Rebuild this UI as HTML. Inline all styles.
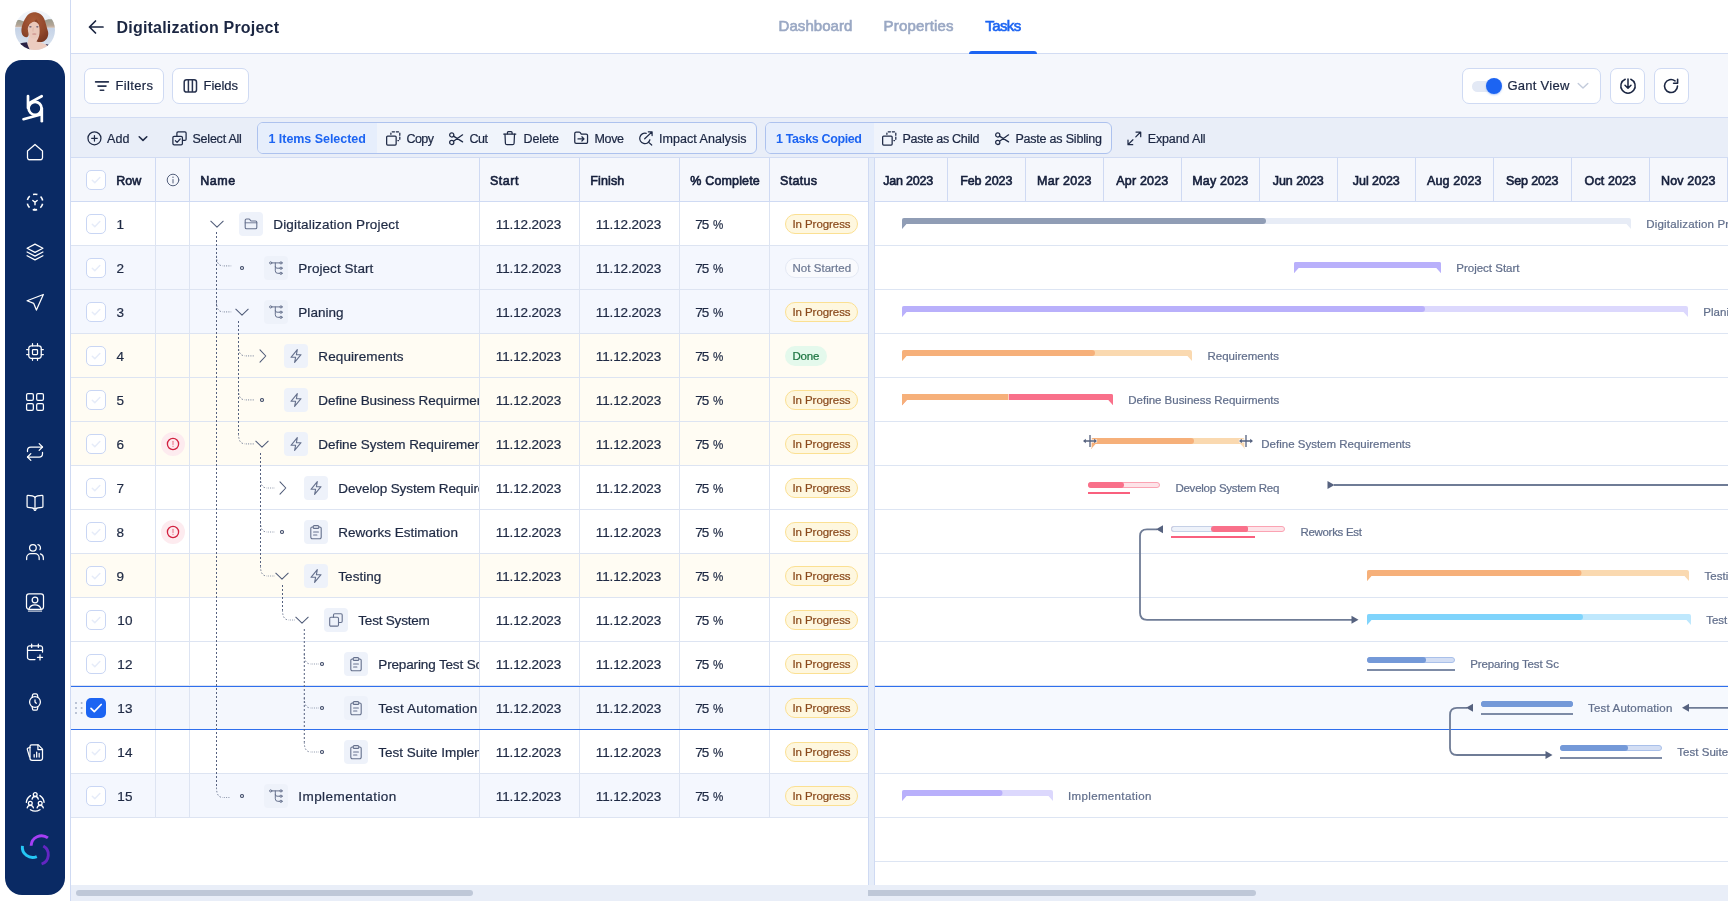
<!DOCTYPE html>
<html><head><meta charset="utf-8"><title>Digitalization Project</title>
<style>
html,body{margin:0;padding:0;}
body{width:1728px;height:901px;position:relative;overflow:hidden;background:#fff;font-family:"Liberation Sans",sans-serif;}
.b{position:absolute;box-sizing:border-box;}
.t{position:absolute;white-space:nowrap;font-family:"Liberation Sans",sans-serif;}
svg{overflow:visible;}
</style></head><body><div id="root" style="position:absolute;left:0;top:0;width:1728px;height:901px;will-change:transform;">
<div class="b" style="left:71px;top:54px;width:1657px;height:64px;background:#f5f7fc;"></div>
<div class="b" style="left:71px;top:117px;width:1657px;height:41px;background:#e9eef8;border-top:1px solid #d2dcf3;border-bottom:1px solid #d2dcf3;"></div>
<div class="b" style="left:71px;top:53px;width:1657px;height:1px;background:#d2dcf3;"></div>
<div class="b" style="left:70px;top:0px;width:1px;height:901px;background:#cfdaf3;"></div>
<svg class="b" style="left:15px;top:10px;" width="40" height="40" viewBox="0 0 40 40">
<defs><clipPath id="av"><circle cx="20" cy="20" r="20"/></clipPath>
<filter id="bl" x="-20%" y="-20%" width="140%" height="140%"><feGaussianBlur stdDeviation=".7"/></filter>
<filter id="bl2" x="-20%" y="-20%" width="140%" height="140%"><feGaussianBlur stdDeviation=".45"/></filter>
<linearGradient id="sky" x1="0" y1="0" x2="0" y2="1"><stop offset="0" stop-color="#f3f6fb"/><stop offset=".42" stop-color="#e6edf6"/><stop offset=".46" stop-color="#c6d3e6"/><stop offset="1" stop-color="#dde6f2"/></linearGradient>
<linearGradient id="hill" x1="0" y1="0" x2="0" y2="1"><stop offset="0" stop-color="#9a9a8c"/><stop offset=".7" stop-color="#b3a596"/><stop offset="1" stop-color="#d2bcae"/></linearGradient>
<radialGradient id="hair" cx=".45" cy=".3" r=".8"><stop offset="0" stop-color="#aa5c3a"/><stop offset=".6" stop-color="#91482b"/><stop offset="1" stop-color="#743421"/></radialGradient>
</defs>
<g clip-path="url(#av)">
<rect width="40" height="40" fill="url(#sky)"/>
<g filter="url(#bl)">
<path d="M-1 11.500C2 9.500 5 9.300 9 11.500L10 17.300H-1Z" fill="url(#hill)"/>
<path d="M29 11C32 9 36 8.500 41 10.500V17.800H29Z" fill="url(#hill)"/>
</g>
<g filter="url(#bl2)">
<path d="M14 26L12.500 33C9 34 7 35.500 5 37.500L8 41H33L35 36.500C32 34.500 29 33.800 26.500 33L25 26Z" fill="#ecccc0"/>
<path d="M4 34.200C6.500 32.800 9.500 32.300 12 32.200C12.500 35 13.500 37.500 15.500 40.500H6Z" fill="#2b2444"/>
<path d="M30.500 34C32 34 33.500 34.500 35 35.500L33.500 37Z" fill="#2b2444"/>
<ellipse cx="20" cy="13" rx="9" ry="9.500" fill="#8e4629"/><ellipse cx="19" cy="20" rx="6.300" ry="8.600" fill="#e9c8ba"/>
<path d="M18.500 2.300C23 2 27.500 4.500 29.500 9.500C31 13.500 31.500 17 33 21.500C34 25.500 32 30 28.500 31.500C26 32.500 23.500 32 21.500 31.500C24 28 24.800 24 24.600 20C24.400 15.500 23.800 12 21.500 9.200C19 11.500 15.500 13 13 14.500C12.600 17.500 12.800 20.500 13.500 23.500C13.800 25 13.500 26.800 11.500 27.200C9 27.500 7 25.500 6.500 22C6 17 8.500 11 11.500 6.500C13.300 4 15.800 2.500 18.500 2.300Z" fill="url(#hair)"/>
<ellipse cx="15.400" cy="16.800" rx="1.300" ry=".6" fill="#4a4766"/>
<ellipse cx="22.300" cy="16.800" rx="1.200" ry=".6" fill="#4a4766"/>
<path d="M18.300 17.500C18 19.500 17.800 20.500 18 21.500" stroke="#dcb2a4" stroke-width=".9" fill="none"/>
<ellipse cx="19.300" cy="24" rx="2.200" ry=".85" fill="#cf9690"/>
</g>
</g></svg>
<div class="b" style="left:5px;top:60px;width:60px;height:835px;background:#0a2a64;border-radius:17px;"></div>
<svg class="b" style="left:20px;top:93px;" width="30" height="30" viewBox="0 0 30 30"><g stroke="#fff" fill="none" stroke-linecap="round" stroke-linejoin="round" stroke-width="2.700">
<circle cx="15.100" cy="15.300" r="6.500"/>
<path d="M8 3V15"/><path d="M21.800 15.500V28.200"/>
<path d="M21.700 3.200L9.400 9.900"/><path d="M3.500 26.200L20.800 21.500"/></g></svg>
<svg class="b" style="left:25.0px;top:141.9px;" width="20" height="20" viewBox="0 0 24 24"><g stroke="#fff" fill="none" stroke-linecap="round" stroke-linejoin="round" stroke-width="1.5"><path d="M3 10.8L12 3l9 7.8V19a2 2 0 0 1-2 2H5a2 2 0 0 1-2-2z"/><path d="M4 21.4h16" stroke-width="1" opacity=".7"/></g></svg>
<svg class="b" style="left:25.0px;top:192.1px;" width="20" height="20" viewBox="0 0 24 24"><g stroke="#fff" fill="none" stroke-linecap="round" stroke-linejoin="round" stroke-width="1.5"><circle cx="12" cy="12" r="9.400" stroke-width="1.900" stroke-dasharray="5.400 4.443" stroke-dashoffset="-2.220" stroke-linecap="butt"/><path d="M9.400 10.100L12 12.400l2.600-2.300M12 12.400v3" stroke-width="1.700"/><path d="M10.400 21.500L12 19.900l1.600 1.600z" fill="#fff" stroke-width=".8"/></g></svg>
<svg class="b" style="left:25.0px;top:241.9px;" width="20" height="20" viewBox="0 0 24 24"><g stroke="#fff" fill="none" stroke-linecap="round" stroke-linejoin="round" stroke-width="1.5"><path d="M12 2.5L2.5 7.5 12 12.5l9.500-5z"/><path d="M2.5 12L12 17l9.500-5"/><path d="M2.5 16.500L12 21.500l9.500-5"/></g></svg>
<svg class="b" style="left:25.0px;top:291.9px;" width="20" height="20" viewBox="0 0 24 24"><g stroke="#fff" fill="none" stroke-linecap="round" stroke-linejoin="round" stroke-width="1.5"><path d="M22 3L2.5 10.5l8 3.200 3.200 8z"/></g></svg>
<svg class="b" style="left:25.0px;top:341.9px;" width="20" height="20" viewBox="0 0 24 24"><g stroke="#fff" fill="none" stroke-linecap="round" stroke-linejoin="round" stroke-width="1.5"><rect x="4.500" y="4.500" width="15" height="15" rx="3"/><rect x="9" y="9" width="6" height="6" rx="1"/><path d="M9 2v2.500M15 2v2.500M9 19.500V22M15 19.500V22M2 9h2.500M2 15h2.500M19.500 9H22M19.500 15H22"/></g></svg>
<svg class="b" style="left:25.0px;top:391.9px;" width="20" height="20" viewBox="0 0 24 24"><g stroke="#fff" fill="none" stroke-linecap="round" stroke-linejoin="round" stroke-width="1.5"><rect x="1.900" y="1.900" width="8.100" height="8.100" rx="1.600"/><rect x="14" y="1.900" width="8.100" height="8.100" rx="1.600"/><rect x="1.900" y="14" width="8.100" height="8.100" rx="1.600"/><rect x="14" y="14" width="8.100" height="8.100" rx="1.600"/></g></svg>
<svg class="b" style="left:25.0px;top:441.9px;" width="20" height="20" viewBox="0 0 24 24"><g stroke="#fff" fill="none" stroke-linecap="round" stroke-linejoin="round" stroke-width="1.5"><path d="M17 2l4 4-4 4"/><path d="M3 11.500V10a4 4 0 0 1 4-4h14"/><path d="M7 22l-4-4 4-4"/><path d="M21 12.500V14a4 4 0 0 1-4 4H3"/></g></svg>
<svg class="b" style="left:25.0px;top:491.9px;" width="20" height="20" viewBox="0 0 24 24"><g stroke="#fff" fill="none" stroke-linecap="round" stroke-linejoin="round" stroke-width="1.5"><path d="M12 6.500v13.500"/><path d="M12 6.500C10.500 4.800 8 4 3.500 4a1 1 0 0 0-1 1v12.500a1 1 0 0 0 1 1c4 0 6.500.500 8.500 2.200 2-1.700 4.500-2.200 8.500-2.200a1 1 0 0 0 1-1V5a1 1 0 0 0-1-1C16 4 13.500 4.800 12 6.500z"/><path d="M10.500 21.500l1.500 1 1.500-1" stroke-width="1.200"/></g></svg>
<svg class="b" style="left:25.0px;top:541.9px;" width="20" height="20" viewBox="0 0 24 24"><g stroke="#fff" fill="none" stroke-linecap="round" stroke-linejoin="round" stroke-width="1.5"><circle cx="9.500" cy="7" r="4"/><path d="M2 21v-2a5 5 0 0 1 5-5h5a5 5 0 0 1 5 5v2"/><path d="M15.500 3.200a4 4 0 0 1 2.500 6"/><path d="M18.500 14.200A5 5 0 0 1 22 19v2"/></g></svg>
<svg class="b" style="left:25.0px;top:591.9px;" width="20" height="20" viewBox="0 0 24 24"><g stroke="#fff" fill="none" stroke-linecap="round" stroke-linejoin="round" stroke-width="1.5"><rect x="1.800" y="2.200" width="20.400" height="18.500" rx="3"/><circle cx="12" cy="9.600" r="3.400"/><path d="M4.800 20.200c1.100-3.200 3.900-4.800 7.200-4.800s6.100 1.600 7.200 4.800"/><path d="M4 22.900h16" stroke-width="1.200"/></g></svg>
<svg class="b" style="left:25.0px;top:641.9px;" width="20" height="20" viewBox="0 0 24 24"><g stroke="#fff" fill="none" stroke-linecap="round" stroke-linejoin="round" stroke-width="1.5"><path d="M21 12V7a2.500 2.500 0 0 0-2.500-2.500h-13A2.500 2.500 0 0 0 3 7v11.500A2.500 2.500 0 0 0 5.500 21H12"/><path d="M8 2.500v4M16 2.500v4M3 10h18"/><path d="M18 15.500v6M15 18.500h6"/></g></svg>
<svg class="b" style="left:25.0px;top:691.9px;" width="20" height="20" viewBox="0 0 24 24"><g stroke="#fff" fill="none" stroke-linecap="round" stroke-linejoin="round" stroke-width="1.5"><circle cx="12" cy="12" r="6.500"/><path d="M12 9.500V12l1.500 1.500"/><path d="M8.500 6.500l.6-3a1.500 1.500 0 0 1 1.500-1.200h2.800a1.500 1.500 0 0 1 1.500 1.200l.6 3"/><path d="M8.500 17.500l.6 3a1.500 1.500 0 0 0 1.500 1.200h2.800a1.500 1.500 0 0 0 1.500-1.200l.6-3"/></g></svg>
<svg class="b" style="left:25.0px;top:741.9px;" width="20" height="20" viewBox="0 0 24 24"><g stroke="#fff" fill="none" stroke-linecap="round" stroke-linejoin="round" stroke-width="1.5"><path d="M8 3.500h8l5 5V19.500a2.500 2.500 0 0 1-2.500 2.500h-10A2.500 2.500 0 0 1 6 19.500v-14A2 2 0 0 1 8 3.500z"/><path d="M15.500 3.500V9H21"/><path d="M6 6.500L3.800 7.200a1.500 1.500 0 0 0-1 1.900L5.500 18"/><path d="M11 18v-3M14 18v-6M17 18v-4.500"/></g></svg>
<svg class="b" style="left:24px;top:791px;" width="22" height="23" viewBox="0 0 22 23"><g stroke="#fff" fill="none" stroke-linecap="round" stroke-linejoin="round" stroke-width="1.300">
<circle cx="11.200" cy="3.500" r="1.900"/><path d="M8.100 8.100c.4-1.900 1.600-2.600 3.100-2.600s2.700.7 3.100 2.600"/>
<circle cx="6.300" cy="12.300" r="1.900"/><path d="M3.200 16.900c.4-1.900 1.600-2.600 3.100-2.600s2.700.7 3.100 2.600"/>
<circle cx="16.200" cy="12.300" r="1.900"/><path d="M13.100 16.900c.4-1.900 1.600-2.600 3.100-2.600s2.700.7 3.100 2.600"/>
<path d="M2.300 11.400A9.200 9.200 0 0 1 6.500 4.600"/><path d="M20.100 11.400A9.200 9.200 0 0 0 15.900 4.600"/><path d="M6.400 18.700A9.200 9.200 0 0 0 16 18.700"/></g></svg>
<svg class="b" style="left:15px;top:830px;" width="40" height="40" viewBox="0 0 40 40"><g fill="none" stroke-linecap="butt" stroke-width="2.900">
<path d="M16.100 15.800A10.500 10.500 0 0 1 32.900 7.900" stroke="#a63ff5"/>
<path d="M28.300 16A9.900 9.900 0 0 1 26.600 34" stroke="#6326c2"/>
<path d="M7.400 15.900A10.300 10.300 0 0 0 21.800 26.600" stroke="#25c7f6"/></g></svg>
<svg class="b" style="left:87px;top:19px;" width="18" height="16" viewBox="0 0 18 16"><path d="M16 8H2.500M8.500 2L2.500 8l6 6" stroke="#1b2642" stroke-width="1.700" fill="none" stroke-linecap="round" stroke-linejoin="round"/></svg>
<div class="t" style="left:116.50px;top:18px;font-size:16px;line-height:20px;color:#1b2642;font-weight:700;letter-spacing:0.203px;">Digitalization Project</div>
<div class="t" style="left:778.60px;top:16px;font-size:15px;line-height:20px;color:#9aa8c4;-webkit-text-stroke:.62px #9aa8c4;letter-spacing:0.052px;">Dashboard</div>
<div class="t" style="left:883.60px;top:16px;font-size:15px;line-height:20px;color:#9aa8c4;-webkit-text-stroke:.62px #9aa8c4;letter-spacing:0.182px;">Properties</div>
<div class="t" style="left:985.20px;top:16px;font-size:15px;line-height:20px;color:#1c64f2;-webkit-text-stroke:.62px #1c64f2;letter-spacing:-0.561px;">Tasks</div>
<div class="b" style="left:969px;top:51px;width:68px;height:3px;background:#1c64f2;border-radius:3px 3px 0 0;"></div>
<div class="b" style="left:84px;top:68px;width:80px;height:36px;background:#fff;border:1px solid #cfdaf3;border-radius:7px;"></div>
<svg class="b" style="left:94px;top:79px;" width="16" height="14" viewBox="0 0 16 14"><path d="M1.600 2.900h12.800M4 7.100h8M6.300 11.300h3.400" stroke="#28334f" stroke-width="1.600" fill="none" stroke-linecap="round"/></svg>
<div class="t" style="left:115.50px;top:76px;font-size:13px;line-height:20px;color:#1b2642;-webkit-text-stroke:.22px #1b2642;letter-spacing:0.352px;">Filters</div>
<div class="b" style="left:172px;top:68px;width:77px;height:36px;background:#fff;border:1px solid #cfdaf3;border-radius:7px;"></div>
<svg class="b" style="left:182.5px;top:78px;" width="15" height="16" viewBox="0 0 15 16"><g stroke="#28334f" stroke-width="1.500" fill="none"><rect x="1.200" y="1.700" width="12.300" height="12.400" rx="2.400"/><path d="M5.400 1.700v12.400M9.400 1.700v12.400"/></g></svg>
<div class="t" style="left:203.50px;top:76px;font-size:13px;line-height:20px;color:#1b2642;-webkit-text-stroke:.22px #1b2642;letter-spacing:-0.035px;">Fields</div>
<div class="b" style="left:1462px;top:68px;width:139px;height:36px;background:#fff;border:1px solid #cfdaf3;border-radius:7px;"></div>
<div class="b" style="left:1472px;top:80.5px;width:24px;height:11px;background:#e3e9f5;border-radius:6px;"></div>
<div class="b" style="left:1486px;top:78px;width:16px;height:16px;background:#1c64f2;border-radius:50%;box-shadow:0 1px 2px rgba(28,100,242,.35);"></div>
<div class="t" style="left:1507.50px;top:76px;font-size:13px;line-height:20px;color:#1b2642;-webkit-text-stroke:.22px #1b2642;letter-spacing:0.258px;">Gant View</div>
<svg class="b" style="left:1577px;top:82px;" width="12" height="8" viewBox="0 0 12 8"><path d="M1.200 1.500L6 6l4.800-4.500" stroke="#c3cbdb" stroke-width="1.400" fill="none" stroke-linecap="round" stroke-linejoin="round"/></svg>
<div class="b" style="left:1610px;top:68px;width:35px;height:36px;background:#fff;border:1px solid #cfdaf3;border-radius:7px;"></div>
<svg class="b" style="left:1619.5px;top:78px;" width="16" height="16" viewBox="0 0 16 16"><g stroke="#1b2642" stroke-width="1.500" fill="none" stroke-linecap="round" stroke-linejoin="round"><path d="M5.200 1.300A7.200 7.200 0 1 0 10.800 1.300"/><path d="M8 1v9M5 7.300l3 3 3-3"/></g></svg>
<div class="b" style="left:1654px;top:68px;width:35px;height:36px;background:#fff;border:1px solid #cfdaf3;border-radius:7px;"></div>
<svg class="b" style="left:1663px;top:78px;" width="16" height="16" viewBox="0 0 16 16"><g stroke="#1b2642" stroke-width="1.600" fill="none" stroke-linecap="round" stroke-linejoin="round"><path d="M14.500 8A6.500 6.500 0 1 1 12 2.900"/><path d="M14.600 1.200v4h-4"/></g></svg>
<svg class="b" style="left:86.5px;top:130.5px;" width="15" height="15" viewBox="0 0 15 15"><g stroke="#1f2a46" stroke-width="1.25" fill="none" stroke-linecap="round" stroke-linejoin="round"><circle cx="7.450" cy="7.300" r="6.500"/><path d="M7.450 4.500v5.600M4.650 7.300h5.600"/></g></svg>
<div class="t" style="left:107.00px;top:129px;font-size:12.5px;line-height:20px;color:#1b2642;-webkit-text-stroke:.22px #1b2642;letter-spacing:0.130px;">Add</div>
<svg class="b" style="left:138px;top:134.5px;" width="11" height="8" viewBox="0 0 11 8"><path d="M1.200 1.700L5 5.400 8.800 1.700" stroke="#1f2a46" stroke-width="1.550" fill="none" stroke-linecap="round" stroke-linejoin="round"/></svg>
<svg class="b" style="left:171.6px;top:130.7px;" width="15" height="15" viewBox="0 0 15 15"><g stroke="#1f2a46" stroke-width="1.25" fill="none" stroke-linecap="round" stroke-linejoin="round"><rect x=".900" y="5.300" width="9.500" height="8.600" rx="1.300"/><path d="M4.900 5V2a1.200 1.200 0 0 1 1.200-1.200H12.900a1.200 1.200 0 0 1 1.200 1.200V8.200a1.200 1.200 0 0 1-1.200 1.200H10.700"/><path d="M3.400 9.700l1.700 1.700 3.100-3.400"/></g></svg>
<div class="t" style="left:192.50px;top:129px;font-size:12.5px;line-height:20px;color:#1b2642;-webkit-text-stroke:.22px #1b2642;letter-spacing:-0.224px;">Select All</div>
<div class="b" style="left:257px;top:122px;width:500px;height:32px;background:#f0f4fb;border:1px solid #adc2ee;border-radius:6px;"></div>
<div class="b" style="left:258px;top:123px;width:119px;height:30px;background:#e6eefc;border-radius:5px 0 0 5px;"></div>
<div class="t" style="left:268.50px;top:129px;font-size:12.5px;line-height:20px;color:#1c64f2;font-weight:700;letter-spacing:-0.044px;">1 Items Selected</div>
<svg class="b" style="left:385.7px;top:130.6px;" width="15" height="15" viewBox="0 0 15 15"><g stroke="#1f2a46" stroke-width="1.25" fill="none" stroke-linecap="round" stroke-linejoin="round"><rect x=".650" y="5" width="9.500" height="9" rx="1"/><path d="M4.900 3.300V2a1.200 1.200 0 0 1 1.200-1.200H12.600a1.200 1.200 0 0 1 1.200 1.200V8.400a1.200 1.200 0 0 1-1.200 1.200H11.900" stroke-dasharray="2.200 1.850" stroke-dashoffset=".900"/></g></svg>
<div class="t" style="left:406.50px;top:129px;font-size:12.5px;line-height:20px;color:#1b2642;-webkit-text-stroke:.22px #1b2642;letter-spacing:-0.560px;">Copy</div>
<svg class="b" style="left:449px;top:131.5px;" width="15" height="14" viewBox="0 0 15 14"><g stroke="#1f2a46" stroke-width="1.25" fill="none" stroke-linecap="round" stroke-linejoin="round"><circle cx="2.750" cy="2.900" r="2.100"/><circle cx="2.750" cy="10.400" r="2.100"/><path d="M4.500 4.100L13.600 9.900M4.500 9.200L13.600 2.800"/></g></svg>
<div class="t" style="left:469.40px;top:129px;font-size:12.5px;line-height:20px;color:#1b2642;-webkit-text-stroke:.22px #1b2642;letter-spacing:-0.426px;">Cut</div>
<svg class="b" style="left:503.3px;top:130.6px;" width="14" height="15" viewBox="0 0 14 15"><g stroke="#1f2a46" stroke-width="1.25" fill="none" stroke-linecap="round" stroke-linejoin="round"><path d="M.700 3H12.800"/><path d="M4.400 2.800V1.700a1 1 0 0 1 1-1h2.700a1 1 0 0 1 1 1V2.800"/><path d="M2 3.200l.400 9a1.600 1.600 0 0 0 1.600 1.500h5.500a1.600 1.600 0 0 0 1.600-1.500l.400-9"/></g></svg>
<div class="t" style="left:523.50px;top:129px;font-size:12.5px;line-height:20px;color:#1b2642;-webkit-text-stroke:.22px #1b2642;letter-spacing:-0.126px;">Delete</div>
<svg class="b" style="left:573.5px;top:131px;" width="15" height="14" viewBox="0 0 15 14"><g stroke="#1f2a46" stroke-width="1.25" fill="none" stroke-linecap="round" stroke-linejoin="round"><path d="M.750 2.400V11a1.400 1.400 0 0 0 1.400 1.400h10a1.400 1.400 0 0 0 1.400-1.400V4.500a1.400 1.400 0 0 0-1.400-1.400H7.300L6 1.400A1 1 0 0 0 5.200 1H2.150A1.400 1.400 0 0 0 .750 2.400z"/><path d="M4 7.900h6M7.900 5.800l2.100 2.100-2.100 2.100"/></g></svg>
<div class="t" style="left:594.60px;top:129px;font-size:12.5px;line-height:20px;color:#1b2642;-webkit-text-stroke:.22px #1b2642;letter-spacing:-0.389px;">Move</div>
<svg class="b" style="left:639.3px;top:130.5px;" width="15" height="15" viewBox="0 0 15 15"><g stroke="#1f2a46" stroke-width="1.25" fill="none" stroke-linecap="round" stroke-linejoin="round"><path d="M7.250 2.400A5.200 5.200 0 1 0 10.920 8.750"/><path d="M9.700 11.400l3 2.600"/><path d="M5.700 7.800L13 .900M9.300.800H13.100V4.600"/></g></svg>
<div class="t" style="left:659.00px;top:129px;font-size:12.5px;line-height:20px;color:#1b2642;-webkit-text-stroke:.22px #1b2642;letter-spacing:0.047px;">Impact Analysis</div>
<div class="b" style="left:765px;top:122px;width:347px;height:32px;background:#f0f4fb;border:1px solid #adc2ee;border-radius:6px;"></div>
<div class="b" style="left:766px;top:123px;width:108px;height:30px;background:#e6eefc;border-radius:5px 0 0 5px;"></div>
<div class="t" style="left:776.00px;top:129px;font-size:12.5px;line-height:20px;color:#1c64f2;font-weight:700;letter-spacing:-0.367px;">1 Tasks Copied</div>
<svg class="b" style="left:881.5px;top:130.6px;" width="15" height="15" viewBox="0 0 15 15"><g stroke="#1f2a46" stroke-width="1.25" fill="none" stroke-linecap="round" stroke-linejoin="round"><rect x=".650" y="5" width="9.500" height="9" rx="1"/><path d="M4.900 3.300V2a1.200 1.200 0 0 1 1.200-1.200H12.600a1.200 1.200 0 0 1 1.200 1.200V8.400a1.200 1.200 0 0 1-1.200 1.200H11.900" stroke-dasharray="2.200 1.850" stroke-dashoffset=".900"/></g></svg>
<div class="t" style="left:902.50px;top:129px;font-size:12.5px;line-height:20px;color:#1b2642;-webkit-text-stroke:.22px #1b2642;letter-spacing:-0.284px;">Paste as Child</div>
<svg class="b" style="left:994.6px;top:131.5px;" width="15" height="14" viewBox="0 0 15 14"><g stroke="#1f2a46" stroke-width="1.25" fill="none" stroke-linecap="round" stroke-linejoin="round"><circle cx="2.750" cy="2.900" r="2.100"/><circle cx="2.750" cy="10.400" r="2.100"/><path d="M4.500 4.100L13.600 9.900M4.500 9.200L13.600 2.800"/></g></svg>
<div class="t" style="left:1015.40px;top:129px;font-size:12.5px;line-height:20px;color:#1b2642;-webkit-text-stroke:.22px #1b2642;letter-spacing:-0.202px;">Paste as Sibling</div>
<svg class="b" style="left:1127px;top:131px;" width="15" height="15" viewBox="0 0 15 15"><g stroke="#1f2a46" stroke-width="1.25" fill="none" stroke-linecap="round" stroke-linejoin="round"><path d="M9 1h4.700v4.700M13.400 1.300L8.800 5.900M5.700 13.700H1V9M1.300 13.400l4.600-4.600"/></g></svg>
<div class="t" style="left:1147.70px;top:129px;font-size:12.5px;line-height:20px;color:#1b2642;-webkit-text-stroke:.22px #1b2642;letter-spacing:-0.130px;">Expand All</div>
<div class="b" style="left:71px;top:158px;width:1657px;height:44px;background:#f5f7fc;border-bottom:1px solid #cfdaf3;"></div>
<div class="b" style="left:155px;top:158px;width:1px;height:44px;background:#cfdaf3;"></div>
<div class="b" style="left:189px;top:158px;width:1px;height:44px;background:#cfdaf3;"></div>
<div class="b" style="left:479px;top:158px;width:1px;height:44px;background:#cfdaf3;"></div>
<div class="b" style="left:579px;top:158px;width:1px;height:44px;background:#cfdaf3;"></div>
<div class="b" style="left:679px;top:158px;width:1px;height:44px;background:#cfdaf3;"></div>
<div class="b" style="left:769px;top:158px;width:1px;height:44px;background:#cfdaf3;"></div>
<div class="t" style="left:116.20px;top:171px;font-size:12.5px;line-height:20px;color:#151f3b;-webkit-text-stroke:.62px #151f3b;letter-spacing:-0.002px;">Row</div>
<svg class="b" style="left:166px;top:173px;" width="14" height="14" viewBox="0 0 14 14"><g stroke="#55617d" fill="none" stroke-width="1" stroke-linecap="round"><circle cx="7" cy="7" r="5.800"/><path d="M7 6.500v3.500"/><path d="M7 4.200v.100" stroke-width="1.300"/></g></svg>
<div class="t" style="left:200.20px;top:171px;font-size:12.5px;line-height:20px;color:#151f3b;-webkit-text-stroke:.62px #151f3b;letter-spacing:0.553px;">Name</div>
<div class="t" style="left:490.00px;top:171px;font-size:12.5px;line-height:20px;color:#151f3b;-webkit-text-stroke:.62px #151f3b;letter-spacing:0.525px;">Start</div>
<div class="t" style="left:590.30px;top:171px;font-size:12.5px;line-height:20px;color:#151f3b;-webkit-text-stroke:.62px #151f3b;letter-spacing:0.132px;">Finish</div>
<div class="t" style="left:690.30px;top:171px;font-size:12.5px;line-height:20px;color:#151f3b;-webkit-text-stroke:.62px #151f3b;letter-spacing:0.157px;">% Complete</div>
<div class="t" style="left:780.00px;top:171px;font-size:12.5px;line-height:20px;color:#151f3b;-webkit-text-stroke:.62px #151f3b;letter-spacing:0.312px;">Status</div>
<div class="b" style="left:86px;top:170px;width:20px;height:20px;background:#fff;border:1px solid #c9d6f4;border-radius:5px;"></div>
<svg class="b" style="left:86px;top:170px;" width="20" height="20" viewBox="0 0 20 20"><path d="M6.300 10.200l2.500 2.500L13.800 7.500" stroke="#e6ecf9" stroke-width="1.500" fill="none" stroke-linecap="round" stroke-linejoin="round"/></svg>
<div class="b" style="left:71px;top:202px;width:797px;height:44px;background:#ffffff;border-bottom:1px solid #dde4f2;"></div>
<div class="b" style="left:155px;top:202px;width:1px;height:44px;background:#dde4f2;"></div>
<div class="b" style="left:189px;top:202px;width:1px;height:44px;background:#dde4f2;"></div>
<div class="b" style="left:479px;top:202px;width:1px;height:44px;background:#dde4f2;"></div>
<div class="b" style="left:579px;top:202px;width:1px;height:44px;background:#dde4f2;"></div>
<div class="b" style="left:679px;top:202px;width:1px;height:44px;background:#dde4f2;"></div>
<div class="b" style="left:769px;top:202px;width:1px;height:44px;background:#dde4f2;"></div>
<div class="b" style="left:86px;top:214px;width:20px;height:20px;background:#fff;border:1px solid #c9d6f4;border-radius:5px;"></div>
<svg class="b" style="left:86px;top:214px;" width="20" height="20" viewBox="0 0 20 20"><path d="M6.300 10.200l2.500 2.500L13.800 7.500" stroke="#e6ecf9" stroke-width="1.500" fill="none" stroke-linecap="round" stroke-linejoin="round"/></svg>
<div class="t" style="left:116.60px;top:215px;font-size:13.5px;line-height:20px;color:#1f2a44;-webkit-text-stroke:.22px #1f2a44;">1</div>
<div class="t" style="left:495.80px;top:215px;font-size:13.5px;line-height:20px;color:#1f2a44;-webkit-text-stroke:.22px #1f2a44;letter-spacing:-0.129px;">11.12.2023</div>
<div class="t" style="left:595.80px;top:215px;font-size:13.5px;line-height:20px;color:#1f2a44;-webkit-text-stroke:.22px #1f2a44;letter-spacing:-0.129px;">11.12.2023</div>
<div class="t" style="left:695.30px;top:215px;font-size:13.5px;line-height:20px;color:#1f2a44;-webkit-text-stroke:.22px #1f2a44;letter-spacing:-1.116px;">75</div>
<div class="t" style="left:713.40px;top:215px;font-size:13.5px;line-height:20px;color:#1f2a44;-webkit-text-stroke:.22px #1f2a44;transform:scaleX(.86);transform-origin:0 0;">%</div>
<div class="b" style="left:785px;top:214px;width:73px;height:20px;background:#fef7df;border:1px solid #fbe092;border-radius:10px;"></div>
<div class="t" style="left:792.40px;top:214px;font-size:11.5px;line-height:20px;color:#8a4a1c;-webkit-text-stroke:.22px #8a4a1c;letter-spacing:-0.060px;">In Progress</div>
<div class="b" style="left:71px;top:246px;width:797px;height:44px;background:#f4f7fe;border-bottom:1px solid #dde4f2;"></div>
<div class="b" style="left:155px;top:246px;width:1px;height:44px;background:#dde4f2;"></div>
<div class="b" style="left:189px;top:246px;width:1px;height:44px;background:#dde4f2;"></div>
<div class="b" style="left:479px;top:246px;width:1px;height:44px;background:#dde4f2;"></div>
<div class="b" style="left:579px;top:246px;width:1px;height:44px;background:#dde4f2;"></div>
<div class="b" style="left:679px;top:246px;width:1px;height:44px;background:#dde4f2;"></div>
<div class="b" style="left:769px;top:246px;width:1px;height:44px;background:#dde4f2;"></div>
<div class="b" style="left:86px;top:258px;width:20px;height:20px;background:#fff;border:1px solid #c9d6f4;border-radius:5px;"></div>
<svg class="b" style="left:86px;top:258px;" width="20" height="20" viewBox="0 0 20 20"><path d="M6.300 10.200l2.500 2.500L13.800 7.500" stroke="#e6ecf9" stroke-width="1.500" fill="none" stroke-linecap="round" stroke-linejoin="round"/></svg>
<div class="t" style="left:116.60px;top:259px;font-size:13.5px;line-height:20px;color:#1f2a44;-webkit-text-stroke:.22px #1f2a44;">2</div>
<div class="t" style="left:495.80px;top:259px;font-size:13.5px;line-height:20px;color:#1f2a44;-webkit-text-stroke:.22px #1f2a44;letter-spacing:-0.129px;">11.12.2023</div>
<div class="t" style="left:595.80px;top:259px;font-size:13.5px;line-height:20px;color:#1f2a44;-webkit-text-stroke:.22px #1f2a44;letter-spacing:-0.129px;">11.12.2023</div>
<div class="t" style="left:695.30px;top:259px;font-size:13.5px;line-height:20px;color:#1f2a44;-webkit-text-stroke:.22px #1f2a44;letter-spacing:-1.116px;">75</div>
<div class="t" style="left:713.40px;top:259px;font-size:13.5px;line-height:20px;color:#1f2a44;-webkit-text-stroke:.22px #1f2a44;transform:scaleX(.86);transform-origin:0 0;">%</div>
<div class="b" style="left:785px;top:258px;width:73.5px;height:20px;background:#f9fafd;border:1px solid #e4e9f4;border-radius:10px;"></div>
<div class="t" style="left:792.40px;top:258px;font-size:11.5px;line-height:20px;color:#6d7993;-webkit-text-stroke:.22px #6d7993;letter-spacing:0.053px;">Not Started</div>
<div class="b" style="left:71px;top:290px;width:797px;height:44px;background:#f4f7fe;border-bottom:1px solid #dde4f2;"></div>
<div class="b" style="left:155px;top:290px;width:1px;height:44px;background:#dde4f2;"></div>
<div class="b" style="left:189px;top:290px;width:1px;height:44px;background:#dde4f2;"></div>
<div class="b" style="left:479px;top:290px;width:1px;height:44px;background:#dde4f2;"></div>
<div class="b" style="left:579px;top:290px;width:1px;height:44px;background:#dde4f2;"></div>
<div class="b" style="left:679px;top:290px;width:1px;height:44px;background:#dde4f2;"></div>
<div class="b" style="left:769px;top:290px;width:1px;height:44px;background:#dde4f2;"></div>
<div class="b" style="left:86px;top:302px;width:20px;height:20px;background:#fff;border:1px solid #c9d6f4;border-radius:5px;"></div>
<svg class="b" style="left:86px;top:302px;" width="20" height="20" viewBox="0 0 20 20"><path d="M6.300 10.200l2.500 2.500L13.800 7.500" stroke="#e6ecf9" stroke-width="1.500" fill="none" stroke-linecap="round" stroke-linejoin="round"/></svg>
<div class="t" style="left:116.60px;top:303px;font-size:13.5px;line-height:20px;color:#1f2a44;-webkit-text-stroke:.22px #1f2a44;">3</div>
<div class="t" style="left:495.80px;top:303px;font-size:13.5px;line-height:20px;color:#1f2a44;-webkit-text-stroke:.22px #1f2a44;letter-spacing:-0.129px;">11.12.2023</div>
<div class="t" style="left:595.80px;top:303px;font-size:13.5px;line-height:20px;color:#1f2a44;-webkit-text-stroke:.22px #1f2a44;letter-spacing:-0.129px;">11.12.2023</div>
<div class="t" style="left:695.30px;top:303px;font-size:13.5px;line-height:20px;color:#1f2a44;-webkit-text-stroke:.22px #1f2a44;letter-spacing:-1.116px;">75</div>
<div class="t" style="left:713.40px;top:303px;font-size:13.5px;line-height:20px;color:#1f2a44;-webkit-text-stroke:.22px #1f2a44;transform:scaleX(.86);transform-origin:0 0;">%</div>
<div class="b" style="left:785px;top:302px;width:73px;height:20px;background:#fef7df;border:1px solid #fbe092;border-radius:10px;"></div>
<div class="t" style="left:792.40px;top:302px;font-size:11.5px;line-height:20px;color:#8a4a1c;-webkit-text-stroke:.22px #8a4a1c;letter-spacing:-0.060px;">In Progress</div>
<div class="b" style="left:71px;top:334px;width:797px;height:44px;background:#fffcf3;border-bottom:1px solid #dde4f2;"></div>
<div class="b" style="left:155px;top:334px;width:1px;height:44px;background:#dde4f2;"></div>
<div class="b" style="left:189px;top:334px;width:1px;height:44px;background:#dde4f2;"></div>
<div class="b" style="left:479px;top:334px;width:1px;height:44px;background:#dde4f2;"></div>
<div class="b" style="left:579px;top:334px;width:1px;height:44px;background:#dde4f2;"></div>
<div class="b" style="left:679px;top:334px;width:1px;height:44px;background:#dde4f2;"></div>
<div class="b" style="left:769px;top:334px;width:1px;height:44px;background:#dde4f2;"></div>
<div class="b" style="left:86px;top:346px;width:20px;height:20px;background:#fff;border:1px solid #c9d6f4;border-radius:5px;"></div>
<svg class="b" style="left:86px;top:346px;" width="20" height="20" viewBox="0 0 20 20"><path d="M6.300 10.200l2.500 2.500L13.800 7.500" stroke="#e6ecf9" stroke-width="1.500" fill="none" stroke-linecap="round" stroke-linejoin="round"/></svg>
<div class="t" style="left:116.60px;top:347px;font-size:13.5px;line-height:20px;color:#1f2a44;-webkit-text-stroke:.22px #1f2a44;">4</div>
<div class="t" style="left:495.80px;top:347px;font-size:13.5px;line-height:20px;color:#1f2a44;-webkit-text-stroke:.22px #1f2a44;letter-spacing:-0.129px;">11.12.2023</div>
<div class="t" style="left:595.80px;top:347px;font-size:13.5px;line-height:20px;color:#1f2a44;-webkit-text-stroke:.22px #1f2a44;letter-spacing:-0.129px;">11.12.2023</div>
<div class="t" style="left:695.30px;top:347px;font-size:13.5px;line-height:20px;color:#1f2a44;-webkit-text-stroke:.22px #1f2a44;letter-spacing:-1.116px;">75</div>
<div class="t" style="left:713.40px;top:347px;font-size:13.5px;line-height:20px;color:#1f2a44;-webkit-text-stroke:.22px #1f2a44;transform:scaleX(.86);transform-origin:0 0;">%</div>
<div class="b" style="left:785px;top:346px;width:42px;height:20px;background:#e4f9ec;border-radius:10px;"></div>
<div class="t" style="left:792.40px;top:346px;font-size:11.5px;line-height:20px;color:#1b7440;-webkit-text-stroke:.22px #1b7440;letter-spacing:-0.164px;">Done</div>
<div class="b" style="left:71px;top:378px;width:797px;height:44px;background:#fffcf3;border-bottom:1px solid #dde4f2;"></div>
<div class="b" style="left:155px;top:378px;width:1px;height:44px;background:#dde4f2;"></div>
<div class="b" style="left:189px;top:378px;width:1px;height:44px;background:#dde4f2;"></div>
<div class="b" style="left:479px;top:378px;width:1px;height:44px;background:#dde4f2;"></div>
<div class="b" style="left:579px;top:378px;width:1px;height:44px;background:#dde4f2;"></div>
<div class="b" style="left:679px;top:378px;width:1px;height:44px;background:#dde4f2;"></div>
<div class="b" style="left:769px;top:378px;width:1px;height:44px;background:#dde4f2;"></div>
<div class="b" style="left:86px;top:390px;width:20px;height:20px;background:#fff;border:1px solid #c9d6f4;border-radius:5px;"></div>
<svg class="b" style="left:86px;top:390px;" width="20" height="20" viewBox="0 0 20 20"><path d="M6.300 10.200l2.500 2.500L13.800 7.500" stroke="#e6ecf9" stroke-width="1.500" fill="none" stroke-linecap="round" stroke-linejoin="round"/></svg>
<div class="t" style="left:116.60px;top:391px;font-size:13.5px;line-height:20px;color:#1f2a44;-webkit-text-stroke:.22px #1f2a44;">5</div>
<div class="t" style="left:495.80px;top:391px;font-size:13.5px;line-height:20px;color:#1f2a44;-webkit-text-stroke:.22px #1f2a44;letter-spacing:-0.129px;">11.12.2023</div>
<div class="t" style="left:595.80px;top:391px;font-size:13.5px;line-height:20px;color:#1f2a44;-webkit-text-stroke:.22px #1f2a44;letter-spacing:-0.129px;">11.12.2023</div>
<div class="t" style="left:695.30px;top:391px;font-size:13.5px;line-height:20px;color:#1f2a44;-webkit-text-stroke:.22px #1f2a44;letter-spacing:-1.116px;">75</div>
<div class="t" style="left:713.40px;top:391px;font-size:13.5px;line-height:20px;color:#1f2a44;-webkit-text-stroke:.22px #1f2a44;transform:scaleX(.86);transform-origin:0 0;">%</div>
<div class="b" style="left:785px;top:390px;width:73px;height:20px;background:#fef7df;border:1px solid #fbe092;border-radius:10px;"></div>
<div class="t" style="left:792.40px;top:390px;font-size:11.5px;line-height:20px;color:#8a4a1c;-webkit-text-stroke:.22px #8a4a1c;letter-spacing:-0.060px;">In Progress</div>
<div class="b" style="left:71px;top:422px;width:797px;height:44px;background:#fffcf3;border-bottom:1px solid #dde4f2;"></div>
<div class="b" style="left:155px;top:422px;width:1px;height:44px;background:#dde4f2;"></div>
<div class="b" style="left:189px;top:422px;width:1px;height:44px;background:#dde4f2;"></div>
<div class="b" style="left:479px;top:422px;width:1px;height:44px;background:#dde4f2;"></div>
<div class="b" style="left:579px;top:422px;width:1px;height:44px;background:#dde4f2;"></div>
<div class="b" style="left:679px;top:422px;width:1px;height:44px;background:#dde4f2;"></div>
<div class="b" style="left:769px;top:422px;width:1px;height:44px;background:#dde4f2;"></div>
<div class="b" style="left:86px;top:434px;width:20px;height:20px;background:#fff;border:1px solid #c9d6f4;border-radius:5px;"></div>
<svg class="b" style="left:86px;top:434px;" width="20" height="20" viewBox="0 0 20 20"><path d="M6.300 10.200l2.500 2.500L13.800 7.500" stroke="#e6ecf9" stroke-width="1.500" fill="none" stroke-linecap="round" stroke-linejoin="round"/></svg>
<div class="t" style="left:116.60px;top:435px;font-size:13.5px;line-height:20px;color:#1f2a44;-webkit-text-stroke:.22px #1f2a44;">6</div>
<div class="b" style="left:161px;top:432px;width:24px;height:24px;background:#fdebef;border-radius:50%;"></div>
<svg class="b" style="left:166px;top:437px;" width="14" height="14" viewBox="0 0 14 14"><g fill="none" stroke-linecap="round"><circle cx="7" cy="7" r="5.600" stroke="#d2213f" stroke-width="1.300"/><path d="M7 4.300v3.200" stroke="#ee8a9b" stroke-width="1.300"/><path d="M7 9.500v.100" stroke="#ee8a9b" stroke-width="1.400"/></g></svg>
<div class="t" style="left:495.80px;top:435px;font-size:13.5px;line-height:20px;color:#1f2a44;-webkit-text-stroke:.22px #1f2a44;letter-spacing:-0.129px;">11.12.2023</div>
<div class="t" style="left:595.80px;top:435px;font-size:13.5px;line-height:20px;color:#1f2a44;-webkit-text-stroke:.22px #1f2a44;letter-spacing:-0.129px;">11.12.2023</div>
<div class="t" style="left:695.30px;top:435px;font-size:13.5px;line-height:20px;color:#1f2a44;-webkit-text-stroke:.22px #1f2a44;letter-spacing:-1.116px;">75</div>
<div class="t" style="left:713.40px;top:435px;font-size:13.5px;line-height:20px;color:#1f2a44;-webkit-text-stroke:.22px #1f2a44;transform:scaleX(.86);transform-origin:0 0;">%</div>
<div class="b" style="left:785px;top:434px;width:73px;height:20px;background:#fef7df;border:1px solid #fbe092;border-radius:10px;"></div>
<div class="t" style="left:792.40px;top:434px;font-size:11.5px;line-height:20px;color:#8a4a1c;-webkit-text-stroke:.22px #8a4a1c;letter-spacing:-0.060px;">In Progress</div>
<div class="b" style="left:71px;top:466px;width:797px;height:44px;background:#ffffff;border-bottom:1px solid #dde4f2;"></div>
<div class="b" style="left:155px;top:466px;width:1px;height:44px;background:#dde4f2;"></div>
<div class="b" style="left:189px;top:466px;width:1px;height:44px;background:#dde4f2;"></div>
<div class="b" style="left:479px;top:466px;width:1px;height:44px;background:#dde4f2;"></div>
<div class="b" style="left:579px;top:466px;width:1px;height:44px;background:#dde4f2;"></div>
<div class="b" style="left:679px;top:466px;width:1px;height:44px;background:#dde4f2;"></div>
<div class="b" style="left:769px;top:466px;width:1px;height:44px;background:#dde4f2;"></div>
<div class="b" style="left:86px;top:478px;width:20px;height:20px;background:#fff;border:1px solid #c9d6f4;border-radius:5px;"></div>
<svg class="b" style="left:86px;top:478px;" width="20" height="20" viewBox="0 0 20 20"><path d="M6.300 10.200l2.500 2.500L13.800 7.500" stroke="#e6ecf9" stroke-width="1.500" fill="none" stroke-linecap="round" stroke-linejoin="round"/></svg>
<div class="t" style="left:116.60px;top:479px;font-size:13.5px;line-height:20px;color:#1f2a44;-webkit-text-stroke:.22px #1f2a44;">7</div>
<div class="t" style="left:495.80px;top:479px;font-size:13.5px;line-height:20px;color:#1f2a44;-webkit-text-stroke:.22px #1f2a44;letter-spacing:-0.129px;">11.12.2023</div>
<div class="t" style="left:595.80px;top:479px;font-size:13.5px;line-height:20px;color:#1f2a44;-webkit-text-stroke:.22px #1f2a44;letter-spacing:-0.129px;">11.12.2023</div>
<div class="t" style="left:695.30px;top:479px;font-size:13.5px;line-height:20px;color:#1f2a44;-webkit-text-stroke:.22px #1f2a44;letter-spacing:-1.116px;">75</div>
<div class="t" style="left:713.40px;top:479px;font-size:13.5px;line-height:20px;color:#1f2a44;-webkit-text-stroke:.22px #1f2a44;transform:scaleX(.86);transform-origin:0 0;">%</div>
<div class="b" style="left:785px;top:478px;width:73px;height:20px;background:#fef7df;border:1px solid #fbe092;border-radius:10px;"></div>
<div class="t" style="left:792.40px;top:478px;font-size:11.5px;line-height:20px;color:#8a4a1c;-webkit-text-stroke:.22px #8a4a1c;letter-spacing:-0.060px;">In Progress</div>
<div class="b" style="left:71px;top:510px;width:797px;height:44px;background:#ffffff;border-bottom:1px solid #dde4f2;"></div>
<div class="b" style="left:155px;top:510px;width:1px;height:44px;background:#dde4f2;"></div>
<div class="b" style="left:189px;top:510px;width:1px;height:44px;background:#dde4f2;"></div>
<div class="b" style="left:479px;top:510px;width:1px;height:44px;background:#dde4f2;"></div>
<div class="b" style="left:579px;top:510px;width:1px;height:44px;background:#dde4f2;"></div>
<div class="b" style="left:679px;top:510px;width:1px;height:44px;background:#dde4f2;"></div>
<div class="b" style="left:769px;top:510px;width:1px;height:44px;background:#dde4f2;"></div>
<div class="b" style="left:86px;top:522px;width:20px;height:20px;background:#fff;border:1px solid #c9d6f4;border-radius:5px;"></div>
<svg class="b" style="left:86px;top:522px;" width="20" height="20" viewBox="0 0 20 20"><path d="M6.300 10.200l2.500 2.500L13.800 7.500" stroke="#e6ecf9" stroke-width="1.500" fill="none" stroke-linecap="round" stroke-linejoin="round"/></svg>
<div class="t" style="left:116.60px;top:523px;font-size:13.5px;line-height:20px;color:#1f2a44;-webkit-text-stroke:.22px #1f2a44;">8</div>
<div class="b" style="left:161px;top:520px;width:24px;height:24px;background:#fdebef;border-radius:50%;"></div>
<svg class="b" style="left:166px;top:525px;" width="14" height="14" viewBox="0 0 14 14"><g fill="none" stroke-linecap="round"><circle cx="7" cy="7" r="5.600" stroke="#d2213f" stroke-width="1.300"/><path d="M7 4.300v3.200" stroke="#ee8a9b" stroke-width="1.300"/><path d="M7 9.500v.100" stroke="#ee8a9b" stroke-width="1.400"/></g></svg>
<div class="t" style="left:495.80px;top:523px;font-size:13.5px;line-height:20px;color:#1f2a44;-webkit-text-stroke:.22px #1f2a44;letter-spacing:-0.129px;">11.12.2023</div>
<div class="t" style="left:595.80px;top:523px;font-size:13.5px;line-height:20px;color:#1f2a44;-webkit-text-stroke:.22px #1f2a44;letter-spacing:-0.129px;">11.12.2023</div>
<div class="t" style="left:695.30px;top:523px;font-size:13.5px;line-height:20px;color:#1f2a44;-webkit-text-stroke:.22px #1f2a44;letter-spacing:-1.116px;">75</div>
<div class="t" style="left:713.40px;top:523px;font-size:13.5px;line-height:20px;color:#1f2a44;-webkit-text-stroke:.22px #1f2a44;transform:scaleX(.86);transform-origin:0 0;">%</div>
<div class="b" style="left:785px;top:522px;width:73px;height:20px;background:#fef7df;border:1px solid #fbe092;border-radius:10px;"></div>
<div class="t" style="left:792.40px;top:522px;font-size:11.5px;line-height:20px;color:#8a4a1c;-webkit-text-stroke:.22px #8a4a1c;letter-spacing:-0.060px;">In Progress</div>
<div class="b" style="left:71px;top:554px;width:797px;height:44px;background:#fffcf3;border-bottom:1px solid #dde4f2;"></div>
<div class="b" style="left:155px;top:554px;width:1px;height:44px;background:#dde4f2;"></div>
<div class="b" style="left:189px;top:554px;width:1px;height:44px;background:#dde4f2;"></div>
<div class="b" style="left:479px;top:554px;width:1px;height:44px;background:#dde4f2;"></div>
<div class="b" style="left:579px;top:554px;width:1px;height:44px;background:#dde4f2;"></div>
<div class="b" style="left:679px;top:554px;width:1px;height:44px;background:#dde4f2;"></div>
<div class="b" style="left:769px;top:554px;width:1px;height:44px;background:#dde4f2;"></div>
<div class="b" style="left:86px;top:566px;width:20px;height:20px;background:#fff;border:1px solid #c9d6f4;border-radius:5px;"></div>
<svg class="b" style="left:86px;top:566px;" width="20" height="20" viewBox="0 0 20 20"><path d="M6.300 10.200l2.500 2.500L13.800 7.500" stroke="#e6ecf9" stroke-width="1.500" fill="none" stroke-linecap="round" stroke-linejoin="round"/></svg>
<div class="t" style="left:116.60px;top:567px;font-size:13.5px;line-height:20px;color:#1f2a44;-webkit-text-stroke:.22px #1f2a44;">9</div>
<div class="t" style="left:495.80px;top:567px;font-size:13.5px;line-height:20px;color:#1f2a44;-webkit-text-stroke:.22px #1f2a44;letter-spacing:-0.129px;">11.12.2023</div>
<div class="t" style="left:595.80px;top:567px;font-size:13.5px;line-height:20px;color:#1f2a44;-webkit-text-stroke:.22px #1f2a44;letter-spacing:-0.129px;">11.12.2023</div>
<div class="t" style="left:695.30px;top:567px;font-size:13.5px;line-height:20px;color:#1f2a44;-webkit-text-stroke:.22px #1f2a44;letter-spacing:-1.116px;">75</div>
<div class="t" style="left:713.40px;top:567px;font-size:13.5px;line-height:20px;color:#1f2a44;-webkit-text-stroke:.22px #1f2a44;transform:scaleX(.86);transform-origin:0 0;">%</div>
<div class="b" style="left:785px;top:566px;width:73px;height:20px;background:#fef7df;border:1px solid #fbe092;border-radius:10px;"></div>
<div class="t" style="left:792.40px;top:566px;font-size:11.5px;line-height:20px;color:#8a4a1c;-webkit-text-stroke:.22px #8a4a1c;letter-spacing:-0.060px;">In Progress</div>
<div class="b" style="left:71px;top:598px;width:797px;height:44px;background:#ffffff;border-bottom:1px solid #dde4f2;"></div>
<div class="b" style="left:155px;top:598px;width:1px;height:44px;background:#dde4f2;"></div>
<div class="b" style="left:189px;top:598px;width:1px;height:44px;background:#dde4f2;"></div>
<div class="b" style="left:479px;top:598px;width:1px;height:44px;background:#dde4f2;"></div>
<div class="b" style="left:579px;top:598px;width:1px;height:44px;background:#dde4f2;"></div>
<div class="b" style="left:679px;top:598px;width:1px;height:44px;background:#dde4f2;"></div>
<div class="b" style="left:769px;top:598px;width:1px;height:44px;background:#dde4f2;"></div>
<div class="b" style="left:86px;top:610px;width:20px;height:20px;background:#fff;border:1px solid #c9d6f4;border-radius:5px;"></div>
<svg class="b" style="left:86px;top:610px;" width="20" height="20" viewBox="0 0 20 20"><path d="M6.300 10.200l2.500 2.500L13.800 7.500" stroke="#e6ecf9" stroke-width="1.500" fill="none" stroke-linecap="round" stroke-linejoin="round"/></svg>
<div class="t" style="left:117.20px;top:611px;font-size:13.5px;line-height:20px;color:#1f2a44;-webkit-text-stroke:.22px #1f2a44;letter-spacing:0.284px;">10</div>
<div class="t" style="left:495.80px;top:611px;font-size:13.5px;line-height:20px;color:#1f2a44;-webkit-text-stroke:.22px #1f2a44;letter-spacing:-0.129px;">11.12.2023</div>
<div class="t" style="left:595.80px;top:611px;font-size:13.5px;line-height:20px;color:#1f2a44;-webkit-text-stroke:.22px #1f2a44;letter-spacing:-0.129px;">11.12.2023</div>
<div class="t" style="left:695.30px;top:611px;font-size:13.5px;line-height:20px;color:#1f2a44;-webkit-text-stroke:.22px #1f2a44;letter-spacing:-1.116px;">75</div>
<div class="t" style="left:713.40px;top:611px;font-size:13.5px;line-height:20px;color:#1f2a44;-webkit-text-stroke:.22px #1f2a44;transform:scaleX(.86);transform-origin:0 0;">%</div>
<div class="b" style="left:785px;top:610px;width:73px;height:20px;background:#fef7df;border:1px solid #fbe092;border-radius:10px;"></div>
<div class="t" style="left:792.40px;top:610px;font-size:11.5px;line-height:20px;color:#8a4a1c;-webkit-text-stroke:.22px #8a4a1c;letter-spacing:-0.060px;">In Progress</div>
<div class="b" style="left:71px;top:642px;width:797px;height:44px;background:#ffffff;border-bottom:1px solid #dde4f2;"></div>
<div class="b" style="left:155px;top:642px;width:1px;height:44px;background:#dde4f2;"></div>
<div class="b" style="left:189px;top:642px;width:1px;height:44px;background:#dde4f2;"></div>
<div class="b" style="left:479px;top:642px;width:1px;height:44px;background:#dde4f2;"></div>
<div class="b" style="left:579px;top:642px;width:1px;height:44px;background:#dde4f2;"></div>
<div class="b" style="left:679px;top:642px;width:1px;height:44px;background:#dde4f2;"></div>
<div class="b" style="left:769px;top:642px;width:1px;height:44px;background:#dde4f2;"></div>
<div class="b" style="left:86px;top:654px;width:20px;height:20px;background:#fff;border:1px solid #c9d6f4;border-radius:5px;"></div>
<svg class="b" style="left:86px;top:654px;" width="20" height="20" viewBox="0 0 20 20"><path d="M6.300 10.200l2.500 2.500L13.800 7.500" stroke="#e6ecf9" stroke-width="1.500" fill="none" stroke-linecap="round" stroke-linejoin="round"/></svg>
<div class="t" style="left:117.20px;top:655px;font-size:13.5px;line-height:20px;color:#1f2a44;-webkit-text-stroke:.22px #1f2a44;letter-spacing:0.284px;">12</div>
<div class="t" style="left:495.80px;top:655px;font-size:13.5px;line-height:20px;color:#1f2a44;-webkit-text-stroke:.22px #1f2a44;letter-spacing:-0.129px;">11.12.2023</div>
<div class="t" style="left:595.80px;top:655px;font-size:13.5px;line-height:20px;color:#1f2a44;-webkit-text-stroke:.22px #1f2a44;letter-spacing:-0.129px;">11.12.2023</div>
<div class="t" style="left:695.30px;top:655px;font-size:13.5px;line-height:20px;color:#1f2a44;-webkit-text-stroke:.22px #1f2a44;letter-spacing:-1.116px;">75</div>
<div class="t" style="left:713.40px;top:655px;font-size:13.5px;line-height:20px;color:#1f2a44;-webkit-text-stroke:.22px #1f2a44;transform:scaleX(.86);transform-origin:0 0;">%</div>
<div class="b" style="left:785px;top:654px;width:73px;height:20px;background:#fef7df;border:1px solid #fbe092;border-radius:10px;"></div>
<div class="t" style="left:792.40px;top:654px;font-size:11.5px;line-height:20px;color:#8a4a1c;-webkit-text-stroke:.22px #8a4a1c;letter-spacing:-0.060px;">In Progress</div>
<div class="b" style="left:71px;top:686px;width:797px;height:44px;background:#f4f7fd;border-top:1px solid #2f6fed;border-bottom:1px solid #2f6fed;"></div>
<div class="b" style="left:155px;top:687px;width:1px;height:42px;background:#dde4f2;"></div>
<div class="b" style="left:189px;top:687px;width:1px;height:42px;background:#dde4f2;"></div>
<div class="b" style="left:479px;top:687px;width:1px;height:42px;background:#dde4f2;"></div>
<div class="b" style="left:579px;top:687px;width:1px;height:42px;background:#dde4f2;"></div>
<div class="b" style="left:679px;top:687px;width:1px;height:42px;background:#dde4f2;"></div>
<div class="b" style="left:769px;top:687px;width:1px;height:42px;background:#dde4f2;"></div>
<div class="b" style="left:86px;top:698px;width:20px;height:20px;background:#1c64f2;border-radius:5px;"></div>
<svg class="b" style="left:86px;top:698px;" width="20" height="20" viewBox="0 0 20 20"><path d="M5 10.300l3.300 3.300L15.200 6.500" stroke="#fff" stroke-width="1.700" fill="none" stroke-linecap="round" stroke-linejoin="round"/></svg>
<svg class="b" style="left:74px;top:700px;" width="10" height="16" viewBox="0 0 10 16"><g fill="#a9b3c8"><circle cx="2" cy="3" r="1"/><circle cx="7.600" cy="3" r="1"/><circle cx="2" cy="8" r="1"/><circle cx="7.600" cy="8" r="1"/><circle cx="2" cy="13" r="1"/><circle cx="7.600" cy="13" r="1"/></g></svg>
<div class="t" style="left:117.20px;top:699px;font-size:13.5px;line-height:20px;color:#1f2a44;-webkit-text-stroke:.22px #1f2a44;letter-spacing:0.284px;">13</div>
<div class="t" style="left:495.80px;top:699px;font-size:13.5px;line-height:20px;color:#1f2a44;-webkit-text-stroke:.22px #1f2a44;letter-spacing:-0.129px;">11.12.2023</div>
<div class="t" style="left:595.80px;top:699px;font-size:13.5px;line-height:20px;color:#1f2a44;-webkit-text-stroke:.22px #1f2a44;letter-spacing:-0.129px;">11.12.2023</div>
<div class="t" style="left:695.30px;top:699px;font-size:13.5px;line-height:20px;color:#1f2a44;-webkit-text-stroke:.22px #1f2a44;letter-spacing:-1.116px;">75</div>
<div class="t" style="left:713.40px;top:699px;font-size:13.5px;line-height:20px;color:#1f2a44;-webkit-text-stroke:.22px #1f2a44;transform:scaleX(.86);transform-origin:0 0;">%</div>
<div class="b" style="left:785px;top:698px;width:73px;height:20px;background:#fef7df;border:1px solid #fbe092;border-radius:10px;"></div>
<div class="t" style="left:792.40px;top:698px;font-size:11.5px;line-height:20px;color:#8a4a1c;-webkit-text-stroke:.22px #8a4a1c;letter-spacing:-0.060px;">In Progress</div>
<div class="b" style="left:71px;top:730px;width:797px;height:44px;background:#ffffff;border-bottom:1px solid #dde4f2;"></div>
<div class="b" style="left:155px;top:730px;width:1px;height:44px;background:#dde4f2;"></div>
<div class="b" style="left:189px;top:730px;width:1px;height:44px;background:#dde4f2;"></div>
<div class="b" style="left:479px;top:730px;width:1px;height:44px;background:#dde4f2;"></div>
<div class="b" style="left:579px;top:730px;width:1px;height:44px;background:#dde4f2;"></div>
<div class="b" style="left:679px;top:730px;width:1px;height:44px;background:#dde4f2;"></div>
<div class="b" style="left:769px;top:730px;width:1px;height:44px;background:#dde4f2;"></div>
<div class="b" style="left:86px;top:742px;width:20px;height:20px;background:#fff;border:1px solid #c9d6f4;border-radius:5px;"></div>
<svg class="b" style="left:86px;top:742px;" width="20" height="20" viewBox="0 0 20 20"><path d="M6.300 10.200l2.500 2.500L13.800 7.500" stroke="#e6ecf9" stroke-width="1.500" fill="none" stroke-linecap="round" stroke-linejoin="round"/></svg>
<div class="t" style="left:117.20px;top:743px;font-size:13.5px;line-height:20px;color:#1f2a44;-webkit-text-stroke:.22px #1f2a44;letter-spacing:0.284px;">14</div>
<div class="t" style="left:495.80px;top:743px;font-size:13.5px;line-height:20px;color:#1f2a44;-webkit-text-stroke:.22px #1f2a44;letter-spacing:-0.129px;">11.12.2023</div>
<div class="t" style="left:595.80px;top:743px;font-size:13.5px;line-height:20px;color:#1f2a44;-webkit-text-stroke:.22px #1f2a44;letter-spacing:-0.129px;">11.12.2023</div>
<div class="t" style="left:695.30px;top:743px;font-size:13.5px;line-height:20px;color:#1f2a44;-webkit-text-stroke:.22px #1f2a44;letter-spacing:-1.116px;">75</div>
<div class="t" style="left:713.40px;top:743px;font-size:13.5px;line-height:20px;color:#1f2a44;-webkit-text-stroke:.22px #1f2a44;transform:scaleX(.86);transform-origin:0 0;">%</div>
<div class="b" style="left:785px;top:742px;width:73px;height:20px;background:#fef7df;border:1px solid #fbe092;border-radius:10px;"></div>
<div class="t" style="left:792.40px;top:742px;font-size:11.5px;line-height:20px;color:#8a4a1c;-webkit-text-stroke:.22px #8a4a1c;letter-spacing:-0.060px;">In Progress</div>
<div class="b" style="left:71px;top:774px;width:797px;height:44px;background:#f4f7fe;border-bottom:1px solid #dde4f2;"></div>
<div class="b" style="left:155px;top:774px;width:1px;height:44px;background:#dde4f2;"></div>
<div class="b" style="left:189px;top:774px;width:1px;height:44px;background:#dde4f2;"></div>
<div class="b" style="left:479px;top:774px;width:1px;height:44px;background:#dde4f2;"></div>
<div class="b" style="left:579px;top:774px;width:1px;height:44px;background:#dde4f2;"></div>
<div class="b" style="left:679px;top:774px;width:1px;height:44px;background:#dde4f2;"></div>
<div class="b" style="left:769px;top:774px;width:1px;height:44px;background:#dde4f2;"></div>
<div class="b" style="left:86px;top:786px;width:20px;height:20px;background:#fff;border:1px solid #c9d6f4;border-radius:5px;"></div>
<svg class="b" style="left:86px;top:786px;" width="20" height="20" viewBox="0 0 20 20"><path d="M6.300 10.200l2.500 2.500L13.800 7.500" stroke="#e6ecf9" stroke-width="1.500" fill="none" stroke-linecap="round" stroke-linejoin="round"/></svg>
<div class="t" style="left:117.20px;top:787px;font-size:13.5px;line-height:20px;color:#1f2a44;-webkit-text-stroke:.22px #1f2a44;letter-spacing:0.284px;">15</div>
<div class="t" style="left:495.80px;top:787px;font-size:13.5px;line-height:20px;color:#1f2a44;-webkit-text-stroke:.22px #1f2a44;letter-spacing:-0.129px;">11.12.2023</div>
<div class="t" style="left:595.80px;top:787px;font-size:13.5px;line-height:20px;color:#1f2a44;-webkit-text-stroke:.22px #1f2a44;letter-spacing:-0.129px;">11.12.2023</div>
<div class="t" style="left:695.30px;top:787px;font-size:13.5px;line-height:20px;color:#1f2a44;-webkit-text-stroke:.22px #1f2a44;letter-spacing:-1.116px;">75</div>
<div class="t" style="left:713.40px;top:787px;font-size:13.5px;line-height:20px;color:#1f2a44;-webkit-text-stroke:.22px #1f2a44;transform:scaleX(.86);transform-origin:0 0;">%</div>
<div class="b" style="left:785px;top:786px;width:73px;height:20px;background:#fef7df;border:1px solid #fbe092;border-radius:10px;"></div>
<div class="t" style="left:792.40px;top:786px;font-size:11.5px;line-height:20px;color:#8a4a1c;-webkit-text-stroke:.22px #8a4a1c;letter-spacing:-0.060px;">In Progress</div>
<div class="b" style="left:190px;top:202px;width:289px;height:620px;overflow:hidden;">
<svg class="b" style="left:20px;top:18px;" width="14" height="9" viewBox="0 0 14 9"><path d="M.800 1.200L7 7.200 13.200 1.200" stroke="#4f5b78" stroke-width="1.050" fill="none" stroke-linecap="round" stroke-linejoin="round"/></svg>
<div class="b" style="left:49px;top:10px;width:24px;height:24px;background:#eef2fa;border-radius:4px;"></div>
<svg class="b" style="left:53px;top:14px;" width="16" height="16" viewBox="0 0 16 16"><g stroke="#66718d" stroke-width="1.1" fill="none" stroke-linecap="round" stroke-linejoin="round"><path d="M2.200 4.300v7.200a1.300 1.300 0 0 0 1.300 1.300h9a1.300 1.300 0 0 0 1.300-1.300V6.300A1.300 1.300 0 0 0 12.500 5H8L6.700 3.400A1 1 0 0 0 6 3H3.500A1.300 1.300 0 0 0 2.200 4.300z"/><path d="M2.200 6.800h11.600" stroke-width=".9"/></g></svg>
<div class="t" style="left:83.30px;top:13px;font-size:13.5px;line-height:20px;color:#1f2a44;-webkit-text-stroke:.22px #1f2a44;letter-spacing:0.162px;">Digitalization Project</div>
<svg class="b" style="left:48px;top:62px;" width="8" height="8" viewBox="0 0 8 8"><circle cx="4" cy="4" r="1.500" stroke="#3a4664" stroke-width="1.100" fill="none"/></svg>
<div class="b" style="left:74px;top:54px;width:24px;height:24px;background:#eef2fa;border-radius:4px;"></div>
<svg class="b" style="left:78px;top:58px;" width="16" height="16" viewBox="0 0 16 16"><g stroke="#66718d" stroke-width="1.0" fill="none" stroke-linecap="round" stroke-linejoin="round"><circle cx="2.700" cy="2.900" r="1.100"/><circle cx="13" cy="2.900" r="1.100"/><circle cx="13" cy="8.200" r="1.100"/><circle cx="13" cy="13.300" r="1.100"/><path d="M3.800 2.900h8.100M7.300 2.900v7.900a2.500 2.500 0 0 0 2.500 2.500h2.100M7.300 6.500a1.700 1.700 0 0 0 1.700 1.700h2.900"/></g></svg>
<div class="t" style="left:108.30px;top:57px;font-size:13.5px;line-height:20px;color:#1f2a44;-webkit-text-stroke:.22px #1f2a44;letter-spacing:0.061px;">Project Start</div>
<svg class="b" style="left:45px;top:106px;" width="14" height="9" viewBox="0 0 14 9"><path d="M.800 1.200L7 7.200 13.200 1.200" stroke="#4f5b78" stroke-width="1.050" fill="none" stroke-linecap="round" stroke-linejoin="round"/></svg>
<div class="b" style="left:74px;top:98px;width:24px;height:24px;background:#eef2fa;border-radius:4px;"></div>
<svg class="b" style="left:78px;top:102px;" width="16" height="16" viewBox="0 0 16 16"><g stroke="#66718d" stroke-width="1.0" fill="none" stroke-linecap="round" stroke-linejoin="round"><circle cx="2.700" cy="2.900" r="1.100"/><circle cx="13" cy="2.900" r="1.100"/><circle cx="13" cy="8.200" r="1.100"/><circle cx="13" cy="13.300" r="1.100"/><path d="M3.800 2.900h8.100M7.300 2.900v7.900a2.500 2.500 0 0 0 2.500 2.500h2.100M7.300 6.500a1.700 1.700 0 0 0 1.700 1.700h2.900"/></g></svg>
<div class="t" style="left:108.30px;top:101px;font-size:13.5px;line-height:20px;color:#1f2a44;-webkit-text-stroke:.22px #1f2a44;letter-spacing:0.044px;">Planing</div>
<svg class="b" style="left:68.5px;top:147px;" width="9" height="14" viewBox="0 0 9 14"><path d="M1 .800L6.800 7 1 13.200" stroke="#4f5b78" stroke-width="1.050" fill="none" stroke-linecap="round" stroke-linejoin="round"/></svg>
<div class="b" style="left:94px;top:142px;width:24px;height:24px;background:#eef2fa;border-radius:4px;"></div>
<svg class="b" style="left:98px;top:146px;" width="16" height="16" viewBox="0 0 16 16"><g stroke="#66718d" stroke-width="1.1" fill="none" stroke-linecap="round" stroke-linejoin="round"><path d="M9.300 1.600L3 9.300h4.600l-1 5.100L13 6.700H8.400z"/></g></svg>
<div class="t" style="left:128.30px;top:145px;font-size:13.5px;line-height:20px;color:#1f2a44;-webkit-text-stroke:.22px #1f2a44;letter-spacing:0.106px;">Requirements</div>
<svg class="b" style="left:68px;top:194px;" width="8" height="8" viewBox="0 0 8 8"><circle cx="4" cy="4" r="1.500" stroke="#3a4664" stroke-width="1.100" fill="none"/></svg>
<div class="b" style="left:94px;top:186px;width:24px;height:24px;background:#eef2fa;border-radius:4px;"></div>
<svg class="b" style="left:98px;top:190px;" width="16" height="16" viewBox="0 0 16 16"><g stroke="#66718d" stroke-width="1.1" fill="none" stroke-linecap="round" stroke-linejoin="round"><path d="M9.300 1.600L3 9.300h4.600l-1 5.100L13 6.700H8.400z"/></g></svg>
<div class="t" style="left:128.30px;top:189px;font-size:13.5px;line-height:20px;color:#1f2a44;-webkit-text-stroke:.22px #1f2a44;letter-spacing:-0.061px;">Define Business Requirments</div>
<svg class="b" style="left:65px;top:238px;" width="14" height="9" viewBox="0 0 14 9"><path d="M.800 1.200L7 7.200 13.200 1.200" stroke="#4f5b78" stroke-width="1.050" fill="none" stroke-linecap="round" stroke-linejoin="round"/></svg>
<div class="b" style="left:94px;top:230px;width:24px;height:24px;background:#eef2fa;border-radius:4px;"></div>
<svg class="b" style="left:98px;top:234px;" width="16" height="16" viewBox="0 0 16 16"><g stroke="#66718d" stroke-width="1.1" fill="none" stroke-linecap="round" stroke-linejoin="round"><path d="M9.300 1.600L3 9.300h4.600l-1 5.100L13 6.700H8.400z"/></g></svg>
<div class="t" style="left:128.30px;top:233px;font-size:13.5px;line-height:20px;color:#1f2a44;-webkit-text-stroke:.22px #1f2a44;letter-spacing:-0.048px;">Define System Requirements</div>
<svg class="b" style="left:88.5px;top:279px;" width="9" height="14" viewBox="0 0 9 14"><path d="M1 .800L6.800 7 1 13.200" stroke="#4f5b78" stroke-width="1.050" fill="none" stroke-linecap="round" stroke-linejoin="round"/></svg>
<div class="b" style="left:114px;top:274px;width:24px;height:24px;background:#eef2fa;border-radius:4px;"></div>
<svg class="b" style="left:118px;top:278px;" width="16" height="16" viewBox="0 0 16 16"><g stroke="#66718d" stroke-width="1.1" fill="none" stroke-linecap="round" stroke-linejoin="round"><path d="M9.300 1.600L3 9.300h4.600l-1 5.100L13 6.700H8.400z"/></g></svg>
<div class="t" style="left:148.30px;top:277px;font-size:13.5px;line-height:20px;color:#1f2a44;-webkit-text-stroke:.22px #1f2a44;letter-spacing:-0.107px;">Develop System Requirements</div>
<svg class="b" style="left:88px;top:326px;" width="8" height="8" viewBox="0 0 8 8"><circle cx="4" cy="4" r="1.500" stroke="#3a4664" stroke-width="1.100" fill="none"/></svg>
<div class="b" style="left:114px;top:318px;width:24px;height:24px;background:#eef2fa;border-radius:4px;"></div>
<svg class="b" style="left:118px;top:322px;" width="16" height="16" viewBox="0 0 16 16"><g stroke="#66718d" stroke-width="1.1" fill="none" stroke-linecap="round" stroke-linejoin="round"><path d="M5.200 3H4.300A1.500 1.500 0 0 0 2.800 4.500v8.700a1.500 1.500 0 0 0 1.500 1.500h7.400a1.500 1.500 0 0 0 1.500-1.500V4.500A1.500 1.500 0 0 0 11.700 3h-.9"/><rect x="5.200" y="1.600" width="5.600" height="2.800" rx="1"/><path d="M5.600 8h4.800M5.600 11h3.300"/></g></svg>
<div class="t" style="left:148.30px;top:321px;font-size:13.5px;line-height:20px;color:#1f2a44;-webkit-text-stroke:.22px #1f2a44;letter-spacing:0.019px;">Reworks Estimation</div>
<svg class="b" style="left:85px;top:370px;" width="14" height="9" viewBox="0 0 14 9"><path d="M.800 1.200L7 7.200 13.200 1.200" stroke="#4f5b78" stroke-width="1.050" fill="none" stroke-linecap="round" stroke-linejoin="round"/></svg>
<div class="b" style="left:114px;top:362px;width:24px;height:24px;background:#eef2fa;border-radius:4px;"></div>
<svg class="b" style="left:118px;top:366px;" width="16" height="16" viewBox="0 0 16 16"><g stroke="#66718d" stroke-width="1.1" fill="none" stroke-linecap="round" stroke-linejoin="round"><path d="M9.300 1.600L3 9.300h4.600l-1 5.100L13 6.700H8.400z"/></g></svg>
<div class="t" style="left:148.30px;top:365px;font-size:13.5px;line-height:20px;color:#1f2a44;-webkit-text-stroke:.22px #1f2a44;letter-spacing:0.038px;">Testing</div>
<svg class="b" style="left:105px;top:414px;" width="14" height="9" viewBox="0 0 14 9"><path d="M.800 1.200L7 7.200 13.200 1.200" stroke="#4f5b78" stroke-width="1.050" fill="none" stroke-linecap="round" stroke-linejoin="round"/></svg>
<div class="b" style="left:134px;top:406px;width:24px;height:24px;background:#eef2fa;border-radius:4px;"></div>
<svg class="b" style="left:138px;top:410px;" width="16" height="16" viewBox="0 0 16 16"><g stroke="#66718d" stroke-width="1.1" fill="none" stroke-linecap="round" stroke-linejoin="round"><rect x="1.700" y="5.300" width="8.800" height="8.800" rx="1.200"/><path d="M5.500 5.300V3a1.200 1.200 0 0 1 1.200-1.200h6.300a1.200 1.200 0 0 1 1.200 1.200v6.300a1.200 1.200 0 0 1-1.200 1.200h-2.500"/></g></svg>
<div class="t" style="left:168.30px;top:409px;font-size:13.5px;line-height:20px;color:#1f2a44;-webkit-text-stroke:.22px #1f2a44;letter-spacing:-0.202px;">Test System</div>
<svg class="b" style="left:128px;top:458px;" width="8" height="8" viewBox="0 0 8 8"><circle cx="4" cy="4" r="1.500" stroke="#3a4664" stroke-width="1.100" fill="none"/></svg>
<div class="b" style="left:154px;top:450px;width:24px;height:24px;background:#eef2fa;border-radius:4px;"></div>
<svg class="b" style="left:158px;top:454px;" width="16" height="16" viewBox="0 0 16 16"><g stroke="#66718d" stroke-width="1.1" fill="none" stroke-linecap="round" stroke-linejoin="round"><path d="M5.200 3H4.300A1.500 1.500 0 0 0 2.800 4.500v8.700a1.500 1.500 0 0 0 1.500 1.500h7.400a1.500 1.500 0 0 0 1.500-1.500V4.500A1.500 1.500 0 0 0 11.700 3h-.9"/><rect x="5.200" y="1.600" width="5.600" height="2.800" rx="1"/><path d="M5.600 8h4.800M5.600 11h3.300"/></g></svg>
<div class="t" style="left:188.30px;top:453px;font-size:13.5px;line-height:20px;color:#1f2a44;-webkit-text-stroke:.22px #1f2a44;letter-spacing:-0.144px;">Preparing Test Scenarios</div>
<svg class="b" style="left:128px;top:502px;" width="8" height="8" viewBox="0 0 8 8"><circle cx="4" cy="4" r="1.500" stroke="#3a4664" stroke-width="1.100" fill="none"/></svg>
<div class="b" style="left:154px;top:494px;width:24px;height:24px;background:#eef2fa;border-radius:4px;"></div>
<svg class="b" style="left:158px;top:498px;" width="16" height="16" viewBox="0 0 16 16"><g stroke="#66718d" stroke-width="1.1" fill="none" stroke-linecap="round" stroke-linejoin="round"><path d="M5.200 3H4.300A1.500 1.500 0 0 0 2.800 4.500v8.700a1.500 1.500 0 0 0 1.500 1.500h7.400a1.500 1.500 0 0 0 1.500-1.500V4.500A1.500 1.500 0 0 0 11.700 3h-.9"/><rect x="5.200" y="1.600" width="5.600" height="2.800" rx="1"/><path d="M5.600 8h4.800M5.600 11h3.300"/></g></svg>
<div class="t" style="left:188.30px;top:497px;font-size:13.5px;line-height:20px;color:#1f2a44;-webkit-text-stroke:.22px #1f2a44;letter-spacing:0.211px;">Test Automation</div>
<svg class="b" style="left:128px;top:546px;" width="8" height="8" viewBox="0 0 8 8"><circle cx="4" cy="4" r="1.500" stroke="#3a4664" stroke-width="1.100" fill="none"/></svg>
<div class="b" style="left:154px;top:538px;width:24px;height:24px;background:#eef2fa;border-radius:4px;"></div>
<svg class="b" style="left:158px;top:542px;" width="16" height="16" viewBox="0 0 16 16"><g stroke="#66718d" stroke-width="1.1" fill="none" stroke-linecap="round" stroke-linejoin="round"><path d="M5.200 3H4.300A1.500 1.500 0 0 0 2.800 4.500v8.700a1.500 1.500 0 0 0 1.500 1.500h7.400a1.500 1.500 0 0 0 1.500-1.500V4.500A1.500 1.500 0 0 0 11.700 3h-.9"/><rect x="5.200" y="1.600" width="5.600" height="2.800" rx="1"/><path d="M5.600 8h4.800M5.600 11h3.300"/></g></svg>
<div class="t" style="left:188.30px;top:541px;font-size:13.5px;line-height:20px;color:#1f2a44;-webkit-text-stroke:.22px #1f2a44;letter-spacing:-0.005px;">Test Suite Implementation</div>
<svg class="b" style="left:48px;top:590px;" width="8" height="8" viewBox="0 0 8 8"><circle cx="4" cy="4" r="1.500" stroke="#3a4664" stroke-width="1.100" fill="none"/></svg>
<div class="b" style="left:74px;top:582px;width:24px;height:24px;background:#eef2fa;border-radius:4px;"></div>
<svg class="b" style="left:78px;top:586px;" width="16" height="16" viewBox="0 0 16 16"><g stroke="#66718d" stroke-width="1.0" fill="none" stroke-linecap="round" stroke-linejoin="round"><circle cx="2.700" cy="2.900" r="1.100"/><circle cx="13" cy="2.900" r="1.100"/><circle cx="13" cy="8.200" r="1.100"/><circle cx="13" cy="13.300" r="1.100"/><path d="M3.800 2.900h8.100M7.300 2.900v7.900a2.500 2.500 0 0 0 2.500 2.500h2.100M7.300 6.500a1.700 1.700 0 0 0 1.700 1.700h2.900"/></g></svg>
<div class="t" style="left:108.30px;top:585px;font-size:13.5px;line-height:20px;color:#1f2a44;-webkit-text-stroke:.22px #1f2a44;letter-spacing:0.439px;">Implementation</div>
<svg class="b" style="left:0px;top:0px;" width="289" height="620" viewBox="0 0 289 620"><path d="M26.5 30V585.5" stroke="#55617f" stroke-width="1" stroke-dasharray="2 2" fill="none"/><path d="M26.5 53.80000000000001C26.5 60.30000000000001 28.3 63.80000000000001 33.0 63.80000000000001" stroke="#55617f" stroke-width="1" stroke-dasharray="1.600 1.700" fill="none" opacity=".75"/><path d="M33.8 63.80000000000001H41.19999999999999" stroke="#8b94a9" stroke-width="1.200" stroke-dasharray="1 1.300" fill="none"/><path d="M26.5 99.80000000000001C26.5 106.30000000000001 28.3 109.80000000000001 33.0 109.80000000000001" stroke="#55617f" stroke-width="1" stroke-dasharray="1.600 1.700" fill="none" opacity=".75"/><path d="M33.8 109.80000000000001H41.19999999999999" stroke="#8b94a9" stroke-width="1.200" stroke-dasharray="1 1.300" fill="none"/><path d="M26.5 585.5C26.5 592.0 28.3 595.5 33.0 595.5" stroke="#55617f" stroke-width="1" stroke-dasharray="1.600 1.700" fill="none" opacity=".75"/><path d="M33.8 595.5H40.5" stroke="#8b94a9" stroke-width="1.200" stroke-dasharray="1 1.300" fill="none"/><path d="M48.5 119V232" stroke="#55617f" stroke-width="1" stroke-dasharray="2 2" fill="none"/><path d="M48.5 143.8C48.5 150.3 50.3 153.8 55.0 153.8" stroke="#55617f" stroke-width="1" stroke-dasharray="1.600 1.700" fill="none" opacity=".75"/><path d="M55.8 153.8H64" stroke="#8b94a9" stroke-width="1.200" stroke-dasharray="1 1.300" fill="none"/><path d="M48.5 187.8C48.5 194.3 50.3 197.8 55.0 197.8" stroke="#55617f" stroke-width="1" stroke-dasharray="1.600 1.700" fill="none" opacity=".75"/><path d="M55.8 197.8H64" stroke="#8b94a9" stroke-width="1.200" stroke-dasharray="1 1.300" fill="none"/><path d="M48.5 231.8C48.5 238.3 50.3 241.8 55.0 241.8" stroke="#55617f" stroke-width="1" stroke-dasharray="1.600 1.700" fill="none" opacity=".75"/><path d="M55.8 241.8H64" stroke="#8b94a9" stroke-width="1.200" stroke-dasharray="1 1.300" fill="none"/><path d="M70.5 251V364" stroke="#55617f" stroke-width="1" stroke-dasharray="2 2" fill="none"/><path d="M70.5 276C70.5 282.5 72.3 286 77.0 286" stroke="#55617f" stroke-width="1" stroke-dasharray="1.600 1.700" fill="none" opacity=".75"/><path d="M77.8 286H85" stroke="#8b94a9" stroke-width="1.200" stroke-dasharray="1 1.300" fill="none"/><path d="M70.5 320C70.5 326.5 72.3 330 77.0 330" stroke="#55617f" stroke-width="1" stroke-dasharray="1.600 1.700" fill="none" opacity=".75"/><path d="M77.8 330H85" stroke="#8b94a9" stroke-width="1.200" stroke-dasharray="1 1.300" fill="none"/><path d="M70.5 364C70.5 370.5 72.3 374 77.0 374" stroke="#55617f" stroke-width="1" stroke-dasharray="1.600 1.700" fill="none" opacity=".75"/><path d="M77.8 374H85" stroke="#8b94a9" stroke-width="1.200" stroke-dasharray="1 1.300" fill="none"/><path d="M92.5 383V408" stroke="#55617f" stroke-width="1" stroke-dasharray="2 2" fill="none"/><path d="M92.5 408C92.5 414.5 94.3 418 99.0 418" stroke="#55617f" stroke-width="1" stroke-dasharray="1.600 1.700" fill="none" opacity=".75"/><path d="M99.8 418H105" stroke="#8b94a9" stroke-width="1.200" stroke-dasharray="1 1.300" fill="none"/><path d="M114.30000000000001 427V540" stroke="#55617f" stroke-width="1" stroke-dasharray="2 2" fill="none"/><path d="M114.30000000000001 452C114.30000000000001 458.5 116.10000000000001 462 120.80000000000001 462" stroke="#55617f" stroke-width="1" stroke-dasharray="1.600 1.700" fill="none" opacity=".75"/><path d="M121.60000000000001 462H129" stroke="#8b94a9" stroke-width="1.200" stroke-dasharray="1 1.300" fill="none"/><path d="M114.30000000000001 496C114.30000000000001 502.5 116.10000000000001 506 120.80000000000001 506" stroke="#55617f" stroke-width="1" stroke-dasharray="1.600 1.700" fill="none" opacity=".75"/><path d="M121.60000000000001 506H129" stroke="#8b94a9" stroke-width="1.200" stroke-dasharray="1 1.300" fill="none"/><path d="M114.30000000000001 540C114.30000000000001 546.5 116.10000000000001 550 120.80000000000001 550" stroke="#55617f" stroke-width="1" stroke-dasharray="1.600 1.700" fill="none" opacity=".75"/><path d="M121.60000000000001 550H129" stroke="#8b94a9" stroke-width="1.200" stroke-dasharray="1 1.300" fill="none"/></svg>
</div>
<div class="b" style="left:71px;top:818px;width:797px;height:67px;background:#fff;"></div>
<div class="b" style="left:868px;top:158px;width:7px;height:727px;background:#e6edf9;border-left:1px solid #cfdaf3;border-right:1px solid #cfdaf3;"></div>
<div class="b" style="left:875px;top:202px;width:853px;height:683px;background:#fff;"></div>
<div class="b" style="left:947px;top:158px;width:1px;height:44px;background:#cfdaf3;"></div>
<div class="t" style="left:883.30px;top:171px;font-size:12.5px;line-height:20px;color:#151f3b;-webkit-text-stroke:.62px #151f3b;letter-spacing:-0.205px;">Jan 2023</div>
<div class="b" style="left:1025px;top:158px;width:1px;height:44px;background:#cfdaf3;"></div>
<div class="t" style="left:960.20px;top:171px;font-size:12.5px;line-height:20px;color:#151f3b;-webkit-text-stroke:.62px #151f3b;letter-spacing:-0.088px;">Feb 2023</div>
<div class="b" style="left:1103px;top:158px;width:1px;height:44px;background:#cfdaf3;"></div>
<div class="t" style="left:1037.05px;top:171px;font-size:12.5px;line-height:20px;color:#151f3b;-webkit-text-stroke:.62px #151f3b;letter-spacing:0.242px;">Mar 2023</div>
<div class="b" style="left:1181px;top:158px;width:1px;height:44px;background:#cfdaf3;"></div>
<div class="t" style="left:1116.30px;top:171px;font-size:12.5px;line-height:20px;color:#151f3b;-webkit-text-stroke:.62px #151f3b;letter-spacing:0.181px;">Apr 2023</div>
<div class="b" style="left:1259px;top:158px;width:1px;height:44px;background:#cfdaf3;"></div>
<div class="t" style="left:1192.30px;top:171px;font-size:12.5px;line-height:20px;color:#151f3b;-webkit-text-stroke:.62px #151f3b;letter-spacing:0.158px;">May 2023</div>
<div class="b" style="left:1337px;top:158px;width:1px;height:44px;background:#cfdaf3;"></div>
<div class="t" style="left:1272.80px;top:171px;font-size:12.5px;line-height:20px;color:#151f3b;-webkit-text-stroke:.62px #151f3b;letter-spacing:-0.062px;">Jun 2023</div>
<div class="b" style="left:1415px;top:158px;width:1px;height:44px;background:#cfdaf3;"></div>
<div class="t" style="left:1352.80px;top:171px;font-size:12.5px;line-height:20px;color:#151f3b;-webkit-text-stroke:.62px #151f3b;letter-spacing:-0.037px;">Jul 2023</div>
<div class="b" style="left:1493px;top:158px;width:1px;height:44px;background:#cfdaf3;"></div>
<div class="t" style="left:1427.05px;top:171px;font-size:12.5px;line-height:20px;color:#151f3b;-webkit-text-stroke:.62px #151f3b;letter-spacing:0.140px;">Aug 2023</div>
<div class="b" style="left:1571px;top:158px;width:1px;height:44px;background:#cfdaf3;"></div>
<div class="t" style="left:1506.05px;top:171px;font-size:12.5px;line-height:20px;color:#151f3b;-webkit-text-stroke:.62px #151f3b;letter-spacing:-0.146px;">Sep 2023</div>
<div class="b" style="left:1649px;top:158px;width:1px;height:44px;background:#cfdaf3;"></div>
<div class="t" style="left:1584.55px;top:171px;font-size:12.5px;line-height:20px;color:#151f3b;-webkit-text-stroke:.62px #151f3b;letter-spacing:0.110px;">Oct 2023</div>
<div class="b" style="left:1727px;top:158px;width:1px;height:44px;background:#cfdaf3;"></div>
<div class="t" style="left:1661.05px;top:171px;font-size:12.5px;line-height:20px;color:#151f3b;-webkit-text-stroke:.62px #151f3b;letter-spacing:0.142px;">Nov 2023</div>
<div class="b" style="left:875px;top:245px;width:853px;height:1px;background:#dde5f3;"></div>
<div class="b" style="left:875px;top:289px;width:853px;height:1px;background:#dde5f3;"></div>
<div class="b" style="left:875px;top:333px;width:853px;height:1px;background:#dde5f3;"></div>
<div class="b" style="left:875px;top:377px;width:853px;height:1px;background:#dde5f3;"></div>
<div class="b" style="left:875px;top:421px;width:853px;height:1px;background:#dde5f3;"></div>
<div class="b" style="left:875px;top:465px;width:853px;height:1px;background:#dde5f3;"></div>
<div class="b" style="left:875px;top:509px;width:853px;height:1px;background:#dde5f3;"></div>
<div class="b" style="left:875px;top:553px;width:853px;height:1px;background:#dde5f3;"></div>
<div class="b" style="left:875px;top:597px;width:853px;height:1px;background:#dde5f3;"></div>
<div class="b" style="left:875px;top:641px;width:853px;height:1px;background:#dde5f3;"></div>
<div class="b" style="left:875px;top:685px;width:853px;height:1px;background:#dde5f3;"></div>
<div class="b" style="left:875px;top:686px;width:853px;height:44px;background:#f6f9fe;border-top:1px solid #2f6fed;border-bottom:1px solid #2f6fed;"></div>
<div class="b" style="left:875px;top:773px;width:853px;height:1px;background:#dde5f3;"></div>
<div class="b" style="left:875px;top:817px;width:853px;height:1px;background:#dde5f3;"></div>
<div class="b" style="left:875px;top:861px;width:853px;height:1px;background:#dde5f3;"></div>
<svg class="b" style="left:902px;top:218px;" width="729" height="12" viewBox="0 0 729 12"><defs><clipPath id="sb0"><path d="M2 0H727Q729 0 729 2V11L724.5 6H4.500L0 11V2Q0 0 2 0Z"/></clipPath></defs><g clip-path="url(#sb0)"><rect x="0" y="0" width="729" height="12" fill="#e7ecf6"/><path d="M0 0H361Q364 0 364 3Q364 6 361 6H5L0 12Z" fill="#909db5"/></g></svg>
<div class="t" style="left:1646.30px;top:214px;font-size:11.5px;line-height:20px;color:#626f8c;-webkit-text-stroke:.22px #626f8c;letter-spacing:0.182px;">Digitalization Project</div>
<svg class="b" style="left:1294px;top:262px;" width="147" height="12" viewBox="0 0 147 12"><defs><clipPath id="sb1"><path d="M2 0H145Q147 0 147 2V11L142.5 6H4.500L0 11V2Q0 0 2 0Z"/></clipPath></defs><g clip-path="url(#sb1)"><rect x="0" y="0" width="147" height="12" fill="#b9b0fb"/><rect x="0" y="0" width="147" height="12" fill="#b9b0fb"/></g></svg>
<div class="t" style="left:1456.30px;top:258px;font-size:11.5px;line-height:20px;color:#626f8c;-webkit-text-stroke:.22px #626f8c;letter-spacing:-0.006px;">Project Start</div>
<svg class="b" style="left:902px;top:306px;" width="786" height="12" viewBox="0 0 786 12"><defs><clipPath id="sb2"><path d="M2 0H784Q786 0 786 2V11L781.5 6H4.500L0 11V2Q0 0 2 0Z"/></clipPath></defs><g clip-path="url(#sb2)"><rect x="0" y="0" width="786" height="12" fill="#dcd8fd"/><path d="M0 0H520Q523 0 523 3Q523 6 520 6H5L0 12Z" fill="#b9b0fb"/></g></svg>
<div class="t" style="left:1703.30px;top:302px;font-size:11.5px;line-height:20px;color:#626f8c;-webkit-text-stroke:.22px #626f8c;letter-spacing:0.023px;">Planing</div>
<svg class="b" style="left:902px;top:350px;" width="290" height="12" viewBox="0 0 290 12"><defs><clipPath id="sb3"><path d="M2 0H288Q290 0 290 2V11L285.5 6H4.500L0 11V2Q0 0 2 0Z"/></clipPath></defs><g clip-path="url(#sb3)"><rect x="0" y="0" width="290" height="12" fill="#fad9b0"/><path d="M0 0H190Q193 0 193 3Q193 6 190 6H5L0 12Z" fill="#f6b07a"/></g></svg>
<div class="t" style="left:1207.50px;top:346px;font-size:11.5px;line-height:20px;color:#626f8c;-webkit-text-stroke:.22px #626f8c;letter-spacing:-0.008px;">Requirements</div>
<svg class="b" style="left:902px;top:394px;" width="211" height="12" viewBox="0 0 211 12"><defs><clipPath id="sb4"><path d="M2 0H209Q211 0 211 2V11L206.5 6H4.500L0 11V2Q0 0 2 0Z"/></clipPath></defs><g clip-path="url(#sb4)"><rect x="0" y="0" width="211" height="12" fill="#f9708a"/><rect x="0" y="0" width="211" height="12" fill="#f9708a"/></g></svg>
<div class="b" style="left:902px;top:394px;width:105.5px;height:6px;background:#f6b07a;border-radius:2px 0 0 0;"></div>
<svg class="b" style="left:902px;top:394px;" width="6" height="12" viewBox="0 0 6 12"><path d="M0 0H5V6L0 11.500Z" fill="#f6b07a"/></svg>
<div class="b" style="left:1007.5px;top:394px;width:1px;height:6px;background:#fbd0c0;"></div>
<div class="t" style="left:1128.30px;top:390px;font-size:11.5px;line-height:20px;color:#626f8c;-webkit-text-stroke:.22px #626f8c;letter-spacing:-0.019px;">Define Business Requirments</div>
<svg class="b" style="left:1091px;top:438px;" width="154" height="12" viewBox="0 0 154 12"><defs><clipPath id="sb5"><path d="M2 0H152Q154 0 154 2V11L149.5 6H4.500L0 11V2Q0 0 2 0Z"/></clipPath></defs><g clip-path="url(#sb5)"><rect x="0" y="0" width="154" height="12" fill="#fad9b0"/><path d="M0 0H100Q103 0 103 3Q103 6 100 6H5L0 12Z" fill="#f6b07a"/></g></svg>
<div class="t" style="left:1261.30px;top:434px;font-size:11.5px;line-height:20px;color:#626f8c;-webkit-text-stroke:.22px #626f8c;letter-spacing:-0.002px;">Define System Requirements</div>
<svg class="b" style="left:1083px;top:434px;" width="14" height="14" viewBox="0 0 14 14"><g stroke="#fff" stroke-width="3.200" fill="none" stroke-linecap="square"><path d="M7 1.500v11M1.500 7h11"/></g><g stroke="#55617e" stroke-width="1.300" fill="none"><path d="M7 1v12M2 7h10"/></g><path d="M0 7l2.800-2.300v4.600zM14 7l-2.800-2.300v4.600z" fill="#55617e"/></svg>
<svg class="b" style="left:1239px;top:434px;" width="14" height="14" viewBox="0 0 14 14"><g stroke="#fff" stroke-width="3.200" fill="none" stroke-linecap="square"><path d="M7 1.500v11M1.500 7h11"/></g><g stroke="#55617e" stroke-width="1.300" fill="none"><path d="M7 1v12M2 7h10"/></g><path d="M0 7l2.800-2.300v4.600zM14 7l-2.800-2.300v4.600z" fill="#55617e"/></svg>
<div class="b" style="left:1088px;top:482px;width:72px;height:6px;background:#fde3e8;border:1px solid #fba3b3;border-radius:3px;"></div>
<div class="b" style="left:1088px;top:482px;width:36px;height:6px;background:#f9708a;border-radius:3px;"></div>
<div class="b" style="left:1088px;top:492px;width:42px;height:2px;background:#f9607e;"></div>
<div class="t" style="left:1175.40px;top:478px;font-size:11.5px;line-height:20px;color:#626f8c;-webkit-text-stroke:.22px #626f8c;letter-spacing:-0.236px;">Develop System Req</div>
<div class="b" style="left:1171px;top:526px;width:114px;height:6px;background:#fde3e8;border:1px solid #fba3b3;border-radius:3px;"></div>
<div class="b" style="left:1211px;top:526px;width:37px;height:6px;background:#f9708a;border-radius:3px;"></div>
<div class="b" style="left:1171px;top:536px;width:84px;height:2px;background:#f9607e;"></div>
<div class="b" style="left:1171px;top:526px;width:43px;height:6px;background:#eef2fa;border:1px solid #c5d0e6;border-radius:3px 0 0 3px;border-right:none;"></div>
<div class="b" style="left:1211px;top:526px;width:37px;height:6px;background:#f9708a;border-radius:3px;"></div>
<div class="t" style="left:1300.40px;top:522px;font-size:11.5px;line-height:20px;color:#626f8c;-webkit-text-stroke:.22px #626f8c;letter-spacing:-0.294px;">Reworks Est</div>
<svg class="b" style="left:1367px;top:570px;" width="322" height="12" viewBox="0 0 322 12"><defs><clipPath id="sb8"><path d="M2 0H320Q322 0 322 2V11L317.5 6H4.500L0 11V2Q0 0 2 0Z"/></clipPath></defs><g clip-path="url(#sb8)"><rect x="0" y="0" width="322" height="12" fill="#fad9b0"/><path d="M0 0H211.5Q214.5 0 214.5 3Q214.5 6 211.5 6H5L0 12Z" fill="#f6b07a"/></g></svg>
<div class="t" style="left:1704.40px;top:566px;font-size:11.5px;line-height:20px;color:#626f8c;-webkit-text-stroke:.22px #626f8c;letter-spacing:0.094px;">Testing</div>
<svg class="b" style="left:1367px;top:614px;" width="324" height="12" viewBox="0 0 324 12"><defs><clipPath id="sb9"><path d="M2 0H322Q324 0 324 2V11L319.5 6H4.500L0 11V2Q0 0 2 0Z"/></clipPath></defs><g clip-path="url(#sb9)"><rect x="0" y="0" width="324" height="12" fill="#bfe8fd"/><path d="M0 0H213Q216 0 216 3Q216 6 213 6H5L0 12Z" fill="#7fd4fc"/></g></svg>
<div class="t" style="left:1706.30px;top:610px;font-size:11.5px;line-height:20px;color:#626f8c;-webkit-text-stroke:.22px #626f8c;letter-spacing:-0.063px;">Test System</div>
<div class="b" style="left:1367px;top:657px;width:88px;height:6px;background:#d3def4;border:1px solid #a9c0ea;border-radius:3px;"></div>
<div class="b" style="left:1367px;top:657px;width:58.5px;height:6px;background:#7499d8;border-radius:3px;"></div>
<div class="b" style="left:1367px;top:669px;width:88px;height:2px;background:#7d8ba6;"></div>
<div class="t" style="left:1470.30px;top:654px;font-size:11.5px;line-height:20px;color:#626f8c;-webkit-text-stroke:.22px #626f8c;letter-spacing:-0.122px;">Preparing Test Sc</div>
<div class="b" style="left:1481px;top:701px;width:92px;height:6px;background:#7499d8;border:1px solid #7499d8;border-radius:3px;"></div>
<div class="b" style="left:1481px;top:701px;width:92px;height:6px;background:#7499d8;border-radius:3px;"></div>
<div class="b" style="left:1481px;top:713px;width:92px;height:2px;background:#7d8ba6;"></div>
<div class="t" style="left:1588.00px;top:698px;font-size:11.5px;line-height:20px;color:#626f8c;-webkit-text-stroke:.22px #626f8c;letter-spacing:0.177px;">Test Automation</div>
<div class="b" style="left:1560px;top:745px;width:102px;height:6px;background:#d3def4;border:1px solid #a9c0ea;border-radius:3px;"></div>
<div class="b" style="left:1560px;top:745px;width:68px;height:6px;background:#7499d8;border-radius:3px;"></div>
<div class="b" style="left:1560px;top:757px;width:102px;height:2px;background:#7d8ba6;"></div>
<div class="t" style="left:1677.20px;top:742px;font-size:11.5px;line-height:20px;color:#626f8c;-webkit-text-stroke:.22px #626f8c;letter-spacing:0.042px;">Test Suite Impl</div>
<svg class="b" style="left:902px;top:790px;" width="151" height="12" viewBox="0 0 151 12"><defs><clipPath id="sb13"><path d="M2 0H149Q151 0 151 2V11L146.5 6H4.500L0 11V2Q0 0 2 0Z"/></clipPath></defs><g clip-path="url(#sb13)"><rect x="0" y="0" width="151" height="12" fill="#dcd8fd"/><path d="M0 0H97.5Q100.5 0 100.5 3Q100.5 6 97.5 6H5L0 12Z" fill="#b9b0fb"/></g></svg>
<div class="t" style="left:1068.00px;top:786px;font-size:11.5px;line-height:20px;color:#626f8c;-webkit-text-stroke:.22px #626f8c;letter-spacing:0.360px;">Implementation</div>
<svg class="b" style="left:0px;top:0px;pointer-events:none;" width="1728" height="901" viewBox="0 0 1728 901"><path d="M1334 485H1728" stroke="#6f7c96" stroke-width="1.800" fill="none" stroke-linejoin="round"/><path d="M1327.500 481v8l7-4z" fill="#56627f"/><path d="M1157 529.300H1147Q1140 529.300 1140 536V612.800Q1140 619.800 1147 619.800H1352" stroke="#6f7c96" stroke-width="1.800" fill="none" stroke-linejoin="round"/><path d="M1163 525.300v8l-7-4z" fill="#56627f"/><path d="M1351.500 615.800v8l7-4z" fill="#56627f"/><path d="M1467 707.800H1457Q1450 707.800 1450 715V748Q1450 755 1457 755H1546" stroke="#6f7c96" stroke-width="1.800" fill="none" stroke-linejoin="round"/><path d="M1473 703.800v8l-7-4z" fill="#56627f"/><path d="M1545.500 751v8l7-4z" fill="#56627f"/><path d="M1688 707.800H1728" stroke="#6f7c96" stroke-width="1.800" fill="none" stroke-linejoin="round"/><path d="M1689 703.800v8l-7-4z" fill="#56627f"/></svg>
<div class="b" style="left:71px;top:885px;width:1657px;height:16px;background:#e9eef8;"></div>
<div class="b" style="left:76px;top:890px;width:397px;height:6px;background:#bfc8d8;border-radius:3px;"></div>
<div class="b" style="left:868px;top:890px;width:388px;height:6px;background:#bfc8d8;border-radius:0 3px 3px 0;"></div>
</div></body></html>
